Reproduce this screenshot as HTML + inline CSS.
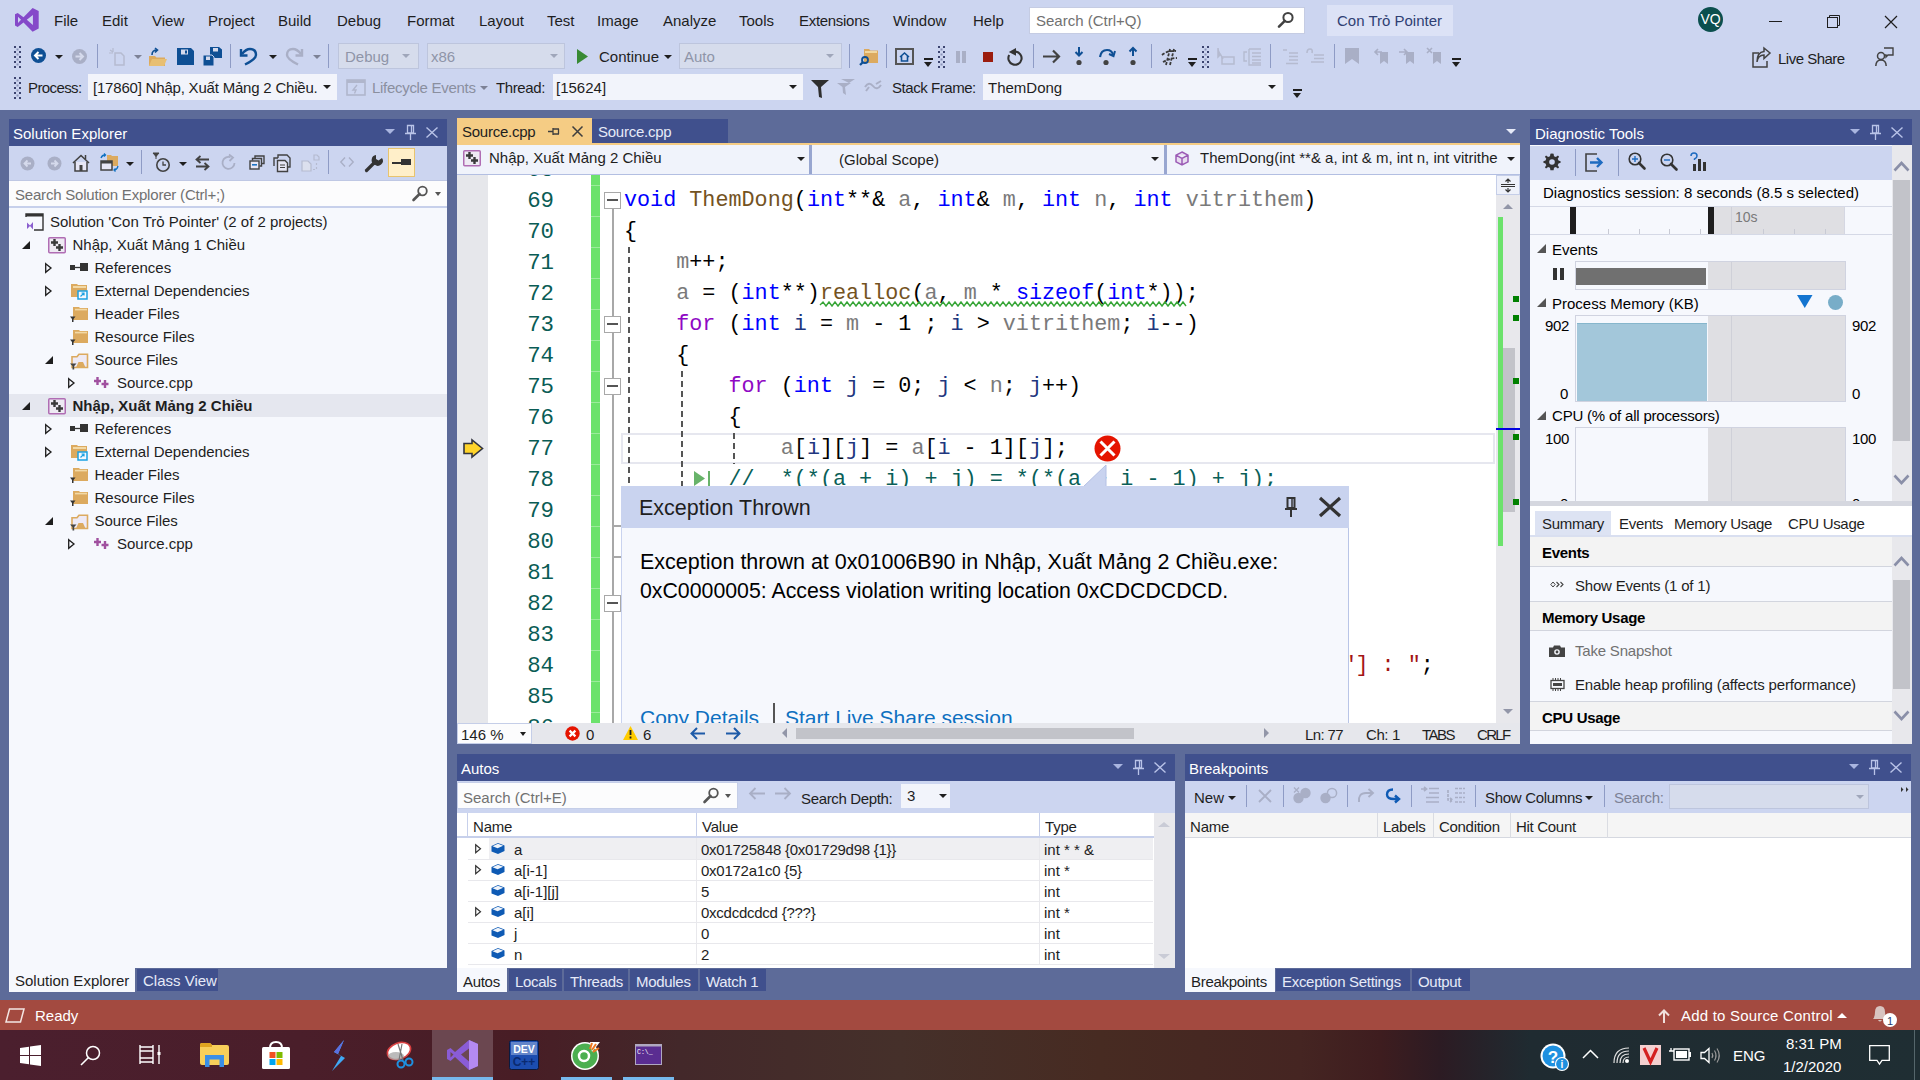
<!DOCTYPE html>
<html><head><meta charset="utf-8">
<style>
*{margin:0;padding:0;box-sizing:border-box}
html,body{width:1920px;height:1080px;overflow:hidden;background:#CCD5F0;font-family:"Liberation Sans",sans-serif;font-size:15px;color:#1E1E1E;position:relative}
.a{position:absolute}
svg{position:absolute;overflow:visible}
.t{position:absolute;font-size:15px;line-height:15px;white-space:nowrap;color:#1E1E1E}
.mono{font-family:"Liberation Mono",monospace}
.grip{position:absolute;width:6px;background-image:radial-gradient(circle at 1px 1px,#6D7495 0.8px,transparent 1px),radial-gradient(circle at 3px 3px,#6D7495 0.8px,transparent 1px);background-size:4px 4px}
.dd{position:absolute;width:0;height:0;border-left:4px solid transparent;border-right:4px solid transparent;border-top:4px solid #1E1E1E}
.dd.g{border-top-color:#7D8296}
.dd.w{border-top-color:#fff}
.sep{position:absolute;width:1px;background:#8E9BC5}
.combo{position:absolute;background:#F2F4FB}
.combo span{position:absolute;top:5px;font-size:15px;line-height:15px;white-space:nowrap;color:#1E1E1E}
.combo i{position:absolute;top:11px;width:0;height:0;border-left:4px solid transparent;border-right:4px solid transparent;border-top:4px solid #1E1E1E}
.combo.dis{background:#D6DCEC;border:1px solid #BDC5DD}
.combo.dis span{color:#8F95A8;top:5px}
.combo.dis i{border-top-color:#9FA6BA;top:10px}
.ovf{position:absolute;width:9px;height:9px}
.ovf:before{content:"";position:absolute;left:0;top:0;width:9px;height:2px;background:#1E1E1E}
.ovf:after{content:"";position:absolute;left:0;top:4px;border-left:4.5px solid transparent;border-right:4.5px solid transparent;border-top:5px solid #1E1E1E}
</style></head>
<body>

<!-- ===== TOP MENU ===== -->
<svg style="left:0px;top:0px" width="40" height="40" viewBox="0 0 40 40"><path d="M15 14.3 L17.7 12.9 L23.5 17.3 L32.6 7.9 L38.7 11.1 V28.5 L32.6 31.8 L23.5 22.6 L17.7 26.9 L15 25.5 Z M18 16.7 L21 19.8 L18 23.1 Z M32.9 15 L26.8 19.8 L32.9 25 Z" fill="#8549C9" fill-rule="evenodd"/></svg>
<div class="t" style="left:54px;top:13px">File</div>
<div class="t" style="left:102px;top:13px">Edit</div>
<div class="t" style="left:152px;top:13px">View</div>
<div class="t" style="left:208px;top:13px">Project</div>
<div class="t" style="left:278px;top:13px">Build</div>
<div class="t" style="left:337px;top:13px">Debug</div>
<div class="t" style="left:407px;top:13px">Format</div>
<div class="t" style="left:479px;top:13px">Layout</div>
<div class="t" style="left:547px;top:13px">Test</div>
<div class="t" style="left:597px;top:13px">Image</div>
<div class="t" style="left:663px;top:13px">Analyze</div>
<div class="t" style="left:739px;top:13px">Tools</div>
<div class="t" style="left:799px;top:13px;letter-spacing:-0.3px">Extensions</div>
<div class="t" style="left:893px;top:13px">Window</div>
<div class="t" style="left:973px;top:13px">Help</div>
<div class="a" style="left:1029px;top:7px;width:276px;height:27px;background:#FFFFFF;border:1px solid #C5CCE3"></div>
<div class="t" style="left:1036px;top:13px;color:#717171">Search (Ctrl+Q)</div>
<svg class="a" style="left:1277px;top:11px" width="18" height="18" viewBox="0 0 18 18"><circle cx="11" cy="6.5" r="4.6" fill="none" stroke="#424242" stroke-width="2"/><path d="M7.8 9.8 L2 15.6" stroke="#424242" stroke-width="2.6" stroke-linecap="round"/></svg>
<div class="a" style="left:1327px;top:5px;width:126px;height:31px;background:#DCE2F6"></div>
<div class="t" style="left:1337px;top:13px;color:#2F3F73">Con Trỏ Pointer</div>
<div class="a" style="left:1698px;top:7px;width:25px;height:25px;border-radius:50%;background:#0B4F4E;color:#fff;font-size:14px;line-height:25px;text-align:center">VQ</div>
<div class="a" style="left:1769px;top:21px;width:13px;height:1px;background:#1E1E1E"></div>
<svg class="a" style="left:1826px;top:14px" width="15" height="15" viewBox="0 0 15 15"><rect x="1.5" y="3.5" width="10" height="10" fill="none" stroke="#1E1E1E"/><path d="M3.5 3.5 V1.5 H13.5 V11.5 H11.5" fill="none" stroke="#1E1E1E"/></svg>
<svg class="a" style="left:1884px;top:15px" width="14" height="14" viewBox="0 0 14 14"><path d="M1 1 L13 13 M13 1 L1 13" stroke="#1E1E1E" stroke-width="1.2"/></svg>

<!-- ===== TOOLBAR ROW 1 ===== -->
<svg style="left:14px;top:42px" width="7" height="26"><rect x="0" y="4" width="2" height="2" fill="#3C4470"/><rect x="5" y="4" width="2" height="2" fill="#3C4470"/><rect x="2.5" y="6.5" width="2" height="2" fill="#8A93B8"/><rect x="0" y="9" width="2" height="2" fill="#3C4470"/><rect x="5" y="9" width="2" height="2" fill="#3C4470"/><rect x="2.5" y="11.5" width="2" height="2" fill="#8A93B8"/><rect x="0" y="14" width="2" height="2" fill="#3C4470"/><rect x="5" y="14" width="2" height="2" fill="#3C4470"/><rect x="2.5" y="16.5" width="2" height="2" fill="#8A93B8"/><rect x="0" y="19" width="2" height="2" fill="#3C4470"/><rect x="5" y="19" width="2" height="2" fill="#3C4470"/><rect x="2.5" y="21.5" width="2" height="2" fill="#8A93B8"/><rect x="0" y="24" width="2" height="2" fill="#3C4470"/><rect x="5" y="24" width="2" height="2" fill="#3C4470"/></svg>
<svg class="a" style="left:30px;top:47px" width="17" height="17" viewBox="0 0 17 17"><circle cx="8.5" cy="8.5" r="7.5" fill="#0E4F94"/><path d="M12.5 8.5 H5.5 M8.5 5 L5 8.5 L8.5 12" stroke="#fff" stroke-width="2" fill="none"/></svg>
<div class="dd" style="left:55px;top:55px"></div>
<svg class="a" style="left:71px;top:48px" width="17" height="17" viewBox="0 0 17 17"><circle cx="8.5" cy="8.5" r="7.5" fill="#A9AFC6"/><path d="M4.5 8.5 H11.5 M8.5 5 L12 8.5 L8.5 12" stroke="#D5DAEC" stroke-width="2" fill="none"/></svg>
<div class="sep" style="left:97px;top:44px;height:24px"></div>
<svg class="a" style="left:108px;top:47px" width="18" height="19" viewBox="0 0 18 19"><path d="M7 6 H13 L16 9 V18 H7 Z" fill="none" stroke="#B5BBD0" stroke-width="1.5"/><path d="M2 3 L5 5 M5 1 V5 M1 6 H5" stroke="#B5BBD0" stroke-width="1.2"/></svg>
<div class="dd g" style="left:134px;top:55px"></div>
<svg class="a" style="left:148px;top:47px" width="20" height="20" viewBox="0 0 20 20"><path d="M1 9 H7 L8.5 10.5 H17 V19 H1 Z" fill="#DCAA5F"/><path d="M1 19 L4 12 H19 L16 19 Z" fill="#E8BF73"/><path d="M4 8 Q4 3 9 3 M7 1 L9.5 3 L7 5.5" stroke="#0E4F94" stroke-width="1.6" fill="none"/></svg>
<svg class="a" style="left:177px;top:48px" width="17" height="17" viewBox="0 0 17 17"><path d="M0 0 H14 L17 3 V17 H0 Z" fill="#0E4F94"/><rect x="4" y="1.5" width="7" height="5" fill="#D5DAEC"/><rect x="8" y="2.5" width="2" height="3" fill="#0E4F94"/></svg>
<svg class="a" style="left:203px;top:47px" width="19" height="19" viewBox="0 0 19 19"><path d="M7 0 H16 L19 2.5 V11 H7 Z" fill="#0E4F94"/><rect x="10" y="1" width="5" height="3.5" fill="#D5DAEC"/><path d="M0 8 H9 L11 10 V19 H0 Z" fill="#0E4F94" stroke="#CCD5F0" stroke-width="1"/><rect x="3" y="9.5" width="4" height="3.5" fill="#D5DAEC"/></svg>
<div class="sep" style="left:230px;top:44px;height:24px"></div>
<svg class="a" style="left:240px;top:46px" width="18" height="20" viewBox="0 0 18 20"><path d="M2 8 Q6 3 10 3 Q16 3 16 9 Q16 13 5 18.5" stroke="#0E4F94" stroke-width="2.4" fill="none"/><path d="M1 3 V9.5 H7.5" stroke="#0E4F94" stroke-width="2.4" fill="none"/></svg>
<div class="dd" style="left:269px;top:55px"></div>
<svg class="a" style="left:285px;top:46px" width="18" height="20" viewBox="0 0 18 20"><path d="M16 8 Q12 3 8 3 Q2 3 2 9 Q2 13 13 18.5" stroke="#A9AFC6" stroke-width="2.4" fill="none"/><path d="M17 3 V9.5 H10.5" stroke="#A9AFC6" stroke-width="2.4" fill="none"/></svg>
<div class="dd g" style="left:313px;top:55px"></div>
<div class="sep" style="left:328px;top:44px;height:24px"></div>
<div class="combo dis" style="left:338px;top:43px;width:81px;height:26px"><span style="left:6px">Debug</span><i style="left:63px"></i></div>
<div class="combo dis" style="left:427px;top:43px;width:138px;height:26px"><span style="left:3px">x86</span><i style="left:122px"></i></div>
<svg class="a" style="left:577px;top:49px" width="12" height="15" viewBox="0 0 12 15"><path d="M0 0 L11 7.5 L0 15 Z" fill="#388A34"/></svg>
<div class="t" style="left:599px;top:49px">Continue</div>
<div class="dd" style="left:664px;top:55px"></div>
<div class="combo dis" style="left:679px;top:43px;width:163px;height:26px"><span style="left:4px">Auto</span><i style="left:146px"></i></div>
<div class="sep" style="left:849px;top:44px;height:24px"></div>
<svg class="a" style="left:859px;top:47px" width="20" height="20" viewBox="0 0 20 20"><path d="M5 2 H10 L11.5 3.5 H19 V16 H5 Z" fill="#DCAA5F"/><rect x="6" y="4" width="12" height="2" fill="#F1D79E"/><circle cx="6" cy="13" r="3" fill="none" stroke="#0E4F94" stroke-width="1.8"/><path d="M3.8 15.2 L1 18" stroke="#0E4F94" stroke-width="2.2"/></svg>
<div class="sep" style="left:886px;top:44px;height:24px"></div>
<svg class="a" style="left:895px;top:48px" width="20" height="17" viewBox="0 0 20 17"><rect x="1" y="1" width="17" height="15" fill="none" stroke="#555" stroke-width="2"/><path d="M5 9 L9.5 5 L14 9 M6.5 8 V13 H12.5 V8" stroke="#0E4F94" stroke-width="1.6" fill="none"/></svg>
<div class="ovf" style="left:924px;top:58px"></div>
<svg style="left:938px;top:42px" width="7" height="26"><rect x="0" y="4" width="2" height="2" fill="#3C4470"/><rect x="5" y="4" width="2" height="2" fill="#3C4470"/><rect x="2.5" y="6.5" width="2" height="2" fill="#8A93B8"/><rect x="0" y="9" width="2" height="2" fill="#3C4470"/><rect x="5" y="9" width="2" height="2" fill="#3C4470"/><rect x="2.5" y="11.5" width="2" height="2" fill="#8A93B8"/><rect x="0" y="14" width="2" height="2" fill="#3C4470"/><rect x="5" y="14" width="2" height="2" fill="#3C4470"/><rect x="2.5" y="16.5" width="2" height="2" fill="#8A93B8"/><rect x="0" y="19" width="2" height="2" fill="#3C4470"/><rect x="5" y="19" width="2" height="2" fill="#3C4470"/><rect x="2.5" y="21.5" width="2" height="2" fill="#8A93B8"/><rect x="0" y="24" width="2" height="2" fill="#3C4470"/><rect x="5" y="24" width="2" height="2" fill="#3C4470"/></svg>
<div class="a" style="left:956px;top:51px;width:4px;height:12px;background:#A9AFC6"></div>
<div class="a" style="left:962px;top:51px;width:4px;height:12px;background:#A9AFC6"></div>
<div class="a" style="left:983px;top:52px;width:10px;height:10px;background:#9B1C0E"></div>
<svg style="left:1006px;top:47px" width="18" height="19" viewBox="0 0 18 19"><path d="M9.5 4.6 A6.6 6.6 0 1 1 3.2 8" stroke="#333" stroke-width="2.1" fill="none"/><path d="M2.8 5 L10 1 V8.8 Z" fill="#333"/></svg>
<div class="sep" style="left:1033px;top:44px;height:24px"></div>
<svg class="a" style="left:1043px;top:49px" width="18" height="15" viewBox="0 0 18 15"><path d="M0 7.5 H16 M10 1.5 L16 7.5 L10 13.5" stroke="#424242" stroke-width="2.2" fill="none"/></svg>
<svg class="a" style="left:1074px;top:47px" width="10" height="20" viewBox="0 0 10 20"><path d="M5 0 V8 M1.5 5 L5 8.5 L8.5 5" stroke="#0E4F94" stroke-width="2" fill="none"/><circle cx="5" cy="15.5" r="2.6" fill="#424242"/></svg>
<svg class="a" style="left:1098px;top:47px" width="18" height="20" viewBox="0 0 18 20"><path d="M2 10 Q3 3 9 3 Q14 3 15 8" stroke="#0E4F94" stroke-width="2.2" fill="none"/><path d="M11 7 L15.5 9 L17 4" stroke="#0E4F94" stroke-width="2" fill="none"/><circle cx="8" cy="15.5" r="2.6" fill="#424242"/></svg>
<svg class="a" style="left:1128px;top:47px" width="10" height="20" viewBox="0 0 10 20"><path d="M5 9 V1 M1.5 4.5 L5 1 L8.5 4.5" stroke="#0E4F94" stroke-width="2" fill="none"/><circle cx="5" cy="15.5" r="2.6" fill="#424242"/></svg>
<div class="sep" style="left:1151px;top:44px;height:24px"></div>
<svg class="a" style="left:1160px;top:48px" width="19" height="18" viewBox="0 0 19 18"><path d="M2 7 Q8 2 16 3 M3 14 Q10 10 17 10 M6 17 L10 1 M10 17 L14 1" stroke="#3A3A3A" stroke-width="1.8" stroke-dasharray="3 1.5" fill="none"/></svg>
<div class="ovf" style="left:1188px;top:58px"></div>
<svg style="left:1202px;top:42px" width="7" height="26"><rect x="0" y="4" width="2" height="2" fill="#3C4470"/><rect x="5" y="4" width="2" height="2" fill="#3C4470"/><rect x="2.5" y="6.5" width="2" height="2" fill="#8A93B8"/><rect x="0" y="9" width="2" height="2" fill="#3C4470"/><rect x="5" y="9" width="2" height="2" fill="#3C4470"/><rect x="2.5" y="11.5" width="2" height="2" fill="#8A93B8"/><rect x="0" y="14" width="2" height="2" fill="#3C4470"/><rect x="5" y="14" width="2" height="2" fill="#3C4470"/><rect x="2.5" y="16.5" width="2" height="2" fill="#8A93B8"/><rect x="0" y="19" width="2" height="2" fill="#3C4470"/><rect x="5" y="19" width="2" height="2" fill="#3C4470"/><rect x="2.5" y="21.5" width="2" height="2" fill="#8A93B8"/><rect x="0" y="24" width="2" height="2" fill="#3C4470"/><rect x="5" y="24" width="2" height="2" fill="#3C4470"/></svg>
<svg class="a" style="left:1217px;top:48px" width="18" height="17" viewBox="0 0 18 17"><path d="M1 0 V9 L3.5 6.5 L6 11" stroke="#B5BBD0" stroke-width="1.5" fill="#B5BBD0"/><rect x="5" y="9" width="12" height="7" fill="none" stroke="#B5BBD0" stroke-width="1.5"/></svg>
<svg class="a" style="left:1243px;top:48px" width="19" height="18" viewBox="0 0 19 18"><path d="M6 1 H18 M6 1 V17 H18 M9 5 H18 M9 8.5 H18 M9 12 H18 M9 15 H18 M4 4 H1 V13 H4" stroke="#B5BBD0" stroke-width="1.4" fill="none"/></svg>
<div class="sep" style="left:1270px;top:44px;height:24px"></div>
<svg class="a" style="left:1283px;top:49px" width="15" height="16" viewBox="0 0 15 16"><path d="M0 1 H4 M6 4 H15 M6 7.5 H15 M6 11 H15 M3 14.5 H15" stroke="#B5BBD0" stroke-width="1.6"/></svg>
<svg class="a" style="left:1306px;top:48px" width="18" height="17" viewBox="0 0 18 17"><path d="M1 5 Q1 1 4 1 Q7 1 6 5 M8 7 H18 M8 10.5 H18 M5 14 H18" stroke="#B5BBD0" stroke-width="1.6" fill="none"/></svg>
<div class="sep" style="left:1334px;top:44px;height:24px"></div>
<svg class="a" style="left:1345px;top:48px" width="15" height="16" viewBox="0 0 15 16"><path d="M0 0 H14 V16 L7 11 L0 16 Z" fill="#A9AFC6"/></svg>
<svg class="a" style="left:1373px;top:48px" width="16" height="16" viewBox="0 0 16 16"><path d="M7 4 H15 V16 L11 13 L7 16 Z" fill="#A9AFC6"/><path d="M9 4 H2 M5 1 L2 4 L5 7" stroke="#A9AFC6" stroke-width="1.6" fill="none"/></svg>
<svg class="a" style="left:1399px;top:48px" width="16" height="16" viewBox="0 0 16 16"><path d="M7 4 H15 V16 L11 13 L7 16 Z" fill="#A9AFC6"/><path d="M0 4 H8 M5 1 L8 4 L5 7" stroke="#A9AFC6" stroke-width="1.6" fill="none"/></svg>
<svg class="a" style="left:1426px;top:47px" width="16" height="17" viewBox="0 0 16 17"><path d="M7 5 H15 V17 L11 14 L7 17 Z" fill="#A9AFC6"/><path d="M1 1 L6 6 M6 1 L1 6" stroke="#A9AFC6" stroke-width="1.6"/></svg>
<div class="ovf" style="left:1452px;top:58px"></div>
<svg class="a" style="left:1752px;top:47px" width="19" height="21" viewBox="0 0 19 21"><path d="M7 6 H1 V20 H15 V14" stroke="#424242" stroke-width="1.5" fill="none"/><path d="M5 15 Q6 8 12 8 V11.5 L18 6 L12 1 V4.5 Q5 5 5 15 Z" stroke="#424242" stroke-width="1.5" fill="none"/></svg>
<div class="t" style="left:1778px;top:51px;letter-spacing:-0.5px">Live Share</div>
<svg class="a" style="left:1875px;top:47px" width="19" height="20" viewBox="0 0 19 20"><circle cx="6" cy="9" r="3.5" fill="none" stroke="#424242" stroke-width="1.5"/><path d="M0.8 19 Q1 13 6 13 Q11 13 11.2 19" fill="none" stroke="#424242" stroke-width="1.5"/><path d="M9 1 H18 V8 H13 L11 10 V8 H9" fill="none" stroke="#424242" stroke-width="1.4"/></svg>

<!-- ===== TOOLBAR ROW 2 ===== -->
<svg style="left:14px;top:73px" width="7" height="26"><rect x="0" y="4" width="2" height="2" fill="#3C4470"/><rect x="5" y="4" width="2" height="2" fill="#3C4470"/><rect x="2.5" y="6.5" width="2" height="2" fill="#8A93B8"/><rect x="0" y="9" width="2" height="2" fill="#3C4470"/><rect x="5" y="9" width="2" height="2" fill="#3C4470"/><rect x="2.5" y="11.5" width="2" height="2" fill="#8A93B8"/><rect x="0" y="14" width="2" height="2" fill="#3C4470"/><rect x="5" y="14" width="2" height="2" fill="#3C4470"/><rect x="2.5" y="16.5" width="2" height="2" fill="#8A93B8"/><rect x="0" y="19" width="2" height="2" fill="#3C4470"/><rect x="5" y="19" width="2" height="2" fill="#3C4470"/><rect x="2.5" y="21.5" width="2" height="2" fill="#8A93B8"/><rect x="0" y="24" width="2" height="2" fill="#3C4470"/><rect x="5" y="24" width="2" height="2" fill="#3C4470"/></svg>
<div class="t" style="left:28px;top:80px;letter-spacing:-0.6px">Process:</div>
<div class="combo" style="left:88px;top:74px;width:249px;height:26px"><span style="left:5px;top:6px;letter-spacing:-0.2px">[17860] Nhập, Xuất Mảng 2 Chiều.</span><i style="left:235px"></i></div>
<svg class="a" style="left:346px;top:79px" width="20" height="17" viewBox="0 0 20 17"><rect x="1" y="1" width="18" height="15" fill="none" stroke="#B0B6CC" stroke-width="1.6"/><rect x="1" y="1" width="18" height="3" fill="#B0B6CC"/><path d="M11 6 L7 11 H10 L8.5 14.5" stroke="#B0B6CC" stroke-width="1.4" fill="none"/></svg>
<div class="t" style="left:372px;top:80px;color:#8A8F9F;letter-spacing:-0.3px">Lifecycle Events</div>
<div class="dd g" style="left:480px;top:86px"></div>
<div class="t" style="left:496px;top:80px;letter-spacing:-0.4px">Thread:</div>
<div class="combo" style="left:553px;top:74px;width:250px;height:26px"><span style="left:3px;top:6px">[15624]</span><i style="left:236px"></i></div>
<svg class="a" style="left:811px;top:79px" width="18" height="19" viewBox="0 0 18 19"><path d="M0 1 H18 L10 8 L11 19 L8 18 L7 8 Z" fill="#2E2E2E"/></svg>
<svg class="a" style="left:837px;top:79px" width="18" height="17" viewBox="0 0 18 17"><path d="M4 0 H18 L12 4 Z M0 4 H14 L8 8 L9 16 L6 14 L5.5 8 Z" fill="#A9AFC6"/></svg>
<svg class="a" style="left:864px;top:80px" width="18" height="14" viewBox="0 0 18 14"><path d="M1 7 Q5 1 9 6 Q13 11 17 5 M2 11 L5 7 M12 4 L17 1" stroke="#A9AFC6" stroke-width="2" fill="none"/></svg>
<div class="t" style="left:892px;top:80px;letter-spacing:-0.45px">Stack Frame:</div>
<div class="combo" style="left:983px;top:74px;width:300px;height:26px"><span style="left:5px;top:6px">ThemDong</span><i style="left:285px"></i></div>
<div class="ovf" style="left:1293px;top:89px"></div>

<div class="a" style="left:0;top:110px;width:1920px;height:890px;background:#5D6B99"></div>

<!-- ===== SOLUTION EXPLORER ===== -->
<div class="a" style="left:9px;top:119px;width:438px;height:27px;background:#40508D"></div>
<div class="t" style="left:13px;top:126px;color:#fff">Solution Explorer</div>
<div class="dd" style="left:385px;top:129px;border-top-color:#A9B5E0;border-left-width:5px;border-right-width:5px;border-top-width:5px"></div>
<svg style="left:405px;top:125px" width="11" height="15" viewBox="0 0 11 15"><path d="M2.5 0.5 H8.5 V8 H2.5 Z M0 8.5 H11 M5.5 9 V15 M6.5 1 V8" stroke="#B9C3E8" stroke-width="1.3" fill="none"/></svg>
<svg style="left:426px;top:127px" width="12" height="11" viewBox="0 0 12 11"><path d="M0.5 0.5 L11.5 10.5 M11.5 0.5 L0.5 10.5" stroke="#B9C3E8" stroke-width="1.4"/></svg>
<div class="a" style="left:9px;top:146px;width:438px;height:34px;background:#CCD5F0"></div>
<svg style="left:20px;top:156px" width="15" height="15" viewBox="0 0 15 15"><circle cx="7.5" cy="7.5" r="7" fill="#A9AFC6"/><path d="M11 7.5 H4.5 M7.5 4.5 L4.5 7.5 L7.5 10.5" stroke="#D5DAEC" stroke-width="1.8" fill="none"/></svg>
<svg style="left:47px;top:156px" width="15" height="15" viewBox="0 0 15 15"><circle cx="7.5" cy="7.5" r="7" fill="#A9AFC6"/><path d="M4 7.5 H10.5 M7.5 4.5 L10.5 7.5 L7.5 10.5" stroke="#D5DAEC" stroke-width="1.8" fill="none"/></svg>
<svg style="left:72px;top:154px" width="18" height="18" viewBox="0 0 18 18"><path d="M1 9 L9 1.5 L17 9" stroke="#424242" stroke-width="1.6" fill="none"/><path d="M3 8 V17 H15 V8" stroke="#424242" stroke-width="1.5" fill="#E6E6F5"/><rect x="7.5" y="11" width="3" height="6" fill="#424242"/><path d="M13.5 1 V5" stroke="#424242" stroke-width="1.5"/></svg>
<svg style="left:100px;top:153px" width="19" height="18" viewBox="0 0 19 18"><path d="M7 2 H11 L12 3 H18 V13 H7 Z" fill="#DCAA5F"/><rect x="1" y="8" width="11" height="9" fill="#E6E6F5" stroke="#424242" stroke-width="1.5"/><rect x="1" y="8" width="11" height="2.5" fill="#424242"/><path d="M1 5 Q2 2 5 2 M4 0.5 L5.5 2 L4 3.5" stroke="#0E70C0" stroke-width="1.3" fill="none"/><path d="M18 13 Q17 17 14 17 M15.5 15.5 L14 17 L15.5 18.5" stroke="#0E70C0" stroke-width="1.3" fill="none"/></svg>
<div class="dd" style="left:126px;top:162px"></div>
<div class="sep" style="left:141px;top:150px;height:24px"></div>
<svg style="left:153px;top:153px" width="18" height="19" viewBox="0 0 18 19"><path d="M0 0 H6 L3 3.5 Z M3 2 V6" stroke="#424242" stroke-width="1" fill="#424242"/><circle cx="10" cy="12" r="6.2" fill="none" stroke="#424242" stroke-width="1.6"/><path d="M10 8.5 V12 H13" stroke="#424242" stroke-width="1.3" fill="none"/></svg>
<div class="dd" style="left:179px;top:162px"></div>
<svg style="left:195px;top:155px" width="15" height="16" viewBox="0 0 15 16"><path d="M14 4.5 H2 M5.5 1 L1.5 4.5 L5.5 8 M1 11.5 H13 M9.5 8 L13.5 11.5 L9.5 15" stroke="#424242" stroke-width="1.8" fill="none"/></svg>
<svg style="left:221px;top:154px" width="16" height="17" viewBox="0 0 16 17"><path d="M13.5 9 A6 6 0 1 1 9.5 3.2" stroke="#A9AFC6" stroke-width="1.8" fill="none"/><path d="M8 0.5 L12 3.5 L8.5 7" stroke="#A9AFC6" stroke-width="1.8" fill="none"/></svg>
<svg style="left:249px;top:155px" width="16" height="15" viewBox="0 0 16 15"><rect x="1" y="6" width="9" height="8" fill="#E6E6F5" stroke="#424242" stroke-width="1.4"/><path d="M3.5 5.5 V3.5 H12.5 V11 H10.5 M6 3 V1 H15 V8.5 H12.8" stroke="#424242" stroke-width="1.4" fill="none"/><rect x="3" y="9" width="5" height="1.6" fill="#1E74C4"/></svg>
<svg style="left:273px;top:154px" width="19" height="18" viewBox="0 0 19 18"><path d="M5 4 V1 H14 L17 4 V13 H15" stroke="#424242" stroke-width="1.4" fill="none"/><path d="M1 12 V4 H5" stroke="#424242" stroke-width="1.4" fill="none"/><path d="M4.5 6.5 H12 L14.5 9 V17.5 H4.5 Z" fill="#E6E6F5" stroke="#424242" stroke-width="1.4"/><path d="M7 11 H12 M7 13.5 H12" stroke="#424242" stroke-width="1.2"/></svg>
<svg style="left:301px;top:154px" width="19" height="18" viewBox="0 0 19 18"><path d="M1 7 H7 L10 10 V17 H1 Z" fill="#DCE0EE" stroke="#B5BBD0" stroke-width="1.2"/><path d="M13 1 H16 L18 3 V6 H13 Z" fill="none" stroke="#B5BBD0" stroke-width="1.2"/><path d="M15.5 9 V11 M15.5 13 V15 M12 15.5 H14" stroke="#B5BBD0" stroke-width="1.2"/></svg>
<div class="sep" style="left:328px;top:150px;height:24px"></div>
<svg style="left:340px;top:157px" width="14" height="10" viewBox="0 0 14 10"><path d="M5 0.5 L0.8 5 L5 9.5 M9 0.5 L13.2 5 L9 9.5" stroke="#A9AFC6" stroke-width="1.4" fill="none"/></svg>
<svg style="left:365px;top:154px" width="18" height="18" viewBox="0 0 18 18"><path d="M1.5 16.5 L9 9" stroke="#333" stroke-width="3.2" stroke-linecap="round"/><path d="M9.5 10.5 A5 5 0 0 1 11 1 L11 5 L13.5 6.5 L17 4 A5 5 0 0 1 9.5 10.5 Z" fill="#333"/></svg>
<div class="a" style="left:388px;top:148px;width:27px;height:29px;background:#FFEFC9;border:1px solid #E8C46E"></div>
<div class="a" style="left:392px;top:162px;width:18px;height:2px;background:#333"></div>
<div class="a" style="left:401px;top:159px;width:10px;height:6px;background:#333"></div>
<div class="a" style="left:9px;top:180px;width:438px;height:1px;background:#BFC8E4"></div>
<div class="a" style="left:9px;top:181px;width:438px;height:25px;background:#FCFCFD"></div>
<div class="t" style="left:15px;top:187px;color:#717171;letter-spacing:-0.2px">Search Solution Explorer (Ctrl+;)</div>
<svg style="left:412px;top:185px" width="16" height="17" viewBox="0 0 16 17"><circle cx="10.5" cy="6" r="4.3" fill="none" stroke="#555" stroke-width="1.8"/><path d="M7.5 9 L1.5 15" stroke="#555" stroke-width="2.6" stroke-linecap="round"/></svg>
<div class="dd" style="left:435px;top:192px;border-top-color:#555;border-left-width:3.5px;border-right-width:3.5px"></div>
<div class="a" style="left:9px;top:206px;width:438px;height:2px;background:#C7D0EB"></div>
<div class="a" style="left:9px;top:208px;width:438px;height:760px;background:#F6F8FD"></div>
<!-- tree -->
<div class="a" style="left:9px;top:394px;width:438px;height:23px;background:#E5E7EF"></div>
<svg style="left:25px;top:213px" width="19" height="18" viewBox="0 0 19 18"><path d="M1 4 V1 H18 V17 H9" stroke="#333" stroke-width="1.4" fill="none"/><rect x="1" y="1" width="17" height="2.5" fill="#333"/><path d="M2 9.5 L5 12.5 L8 9 V16.5 L5 13 L2 16 Z" fill="#8B5FCF"/></svg>
<div class="t" style="left:50px;top:214px">Solution 'Con Trỏ Pointer' (2 of 2 projects)</div>
<svg width="0" height="0" style="position:absolute"><defs>
<g id="i-exp"><path d="M8 0 V8 H0 Z" fill="#1E1E1E"/></g>
<g id="i-col"><path d="M0.7 0.7 L6 5 L0.7 9.3 Z" fill="none" stroke="#1E1E1E" stroke-width="1.3"/></g>
<g id="i-proj"><rect x="0.75" y="0.75" width="16.5" height="15" rx="1" fill="#EEEAF3" stroke="#B06DB4" stroke-width="1.5"/><path d="M6.5 2 V9 M3 5.5 H10 M11.5 7 V14 M8 10.5 H15" stroke="#3A3A3A" stroke-width="2.4"/></g>
<g id="i-refs"><rect x="0" y="2" width="5" height="5" fill="#333"/><rect x="10" y="0" width="8" height="8" fill="#333"/><path d="M5 4.5 H10" stroke="#333" stroke-width="1.3"/></g>
<g id="i-ext"><path d="M1 2 H7 L8 3 H17 V15 H1 Z" fill="#DCAA5F"/><rect x="3" y="4" width="13" height="2" fill="#F2D9A6"/><rect x="8" y="9" width="9" height="8" fill="#F6F8FD" stroke="#1BA1E2" stroke-width="1.5"/><path d="M10.5 14.5 L14 11 M11.5 11 H14 V13.5" stroke="#1BA1E2" stroke-width="1.2" fill="none"/></g>
<g id="i-filt"><path d="M3 2 H9 L10 3 H18 V15 H3 Z" fill="#DCAA5F"/><rect x="5" y="3.8" width="12" height="1.6" fill="#F2D9A6"/><path d="M0 11.5 H5.5 L3.5 14 V17 H2 V14 Z" fill="#333"/></g>
<g id="i-filto"><path d="M2 6 V16.5 H17.5 V3.2 H9 L7 5.8 H2 Z" fill="#EEEAF5" stroke="#DCAA5F" stroke-width="1.6"/><path d="M6 16.5 L8.5 11 H13 L15.5 16.5 Z" fill="#DCAA5F"/><path d="M0 12.5 H6.5 L4.2 15 V18.5 H2.5 V15 Z" fill="#444"/></g>
<g id="i-cpp"><path d="M3.5 0 V8 M0 4 H7 M11 3 V11 M7.5 7 H14.5" stroke="#A0509F" stroke-width="2.4"/></g>
</defs></svg>
<svg style="left:22px;top:241px" width="9" height="9"><use href="#i-exp"/></svg>
<svg style="left:48px;top:237px" width="19" height="18"><use href="#i-proj"/></svg>
<div class="t" style="left:72.5px;top:237px">Nhập, Xuất Mảng 1 Chiều</div>
<svg style="left:45px;top:263px" width="8" height="11"><use href="#i-col"/></svg>
<svg style="left:70px;top:263px" width="19" height="18"><use href="#i-refs"/></svg>
<div class="t" style="left:94.5px;top:260px">References</div>
<svg style="left:45px;top:286px" width="8" height="11"><use href="#i-col"/></svg>
<svg style="left:70px;top:282px" width="19" height="18"><use href="#i-ext"/></svg>
<div class="t" style="left:94.5px;top:283px">External Dependencies</div>
<svg style="left:70px;top:305px" width="19" height="18"><use href="#i-filt"/></svg>
<div class="t" style="left:94.5px;top:306px">Header Files</div>
<svg style="left:70px;top:328px" width="19" height="18"><use href="#i-filt"/></svg>
<div class="t" style="left:94.5px;top:329px">Resource Files</div>
<svg style="left:45px;top:356px" width="9" height="9"><use href="#i-exp"/></svg>
<svg style="left:70px;top:351px" width="19" height="18"><use href="#i-filto"/></svg>
<div class="t" style="left:94.5px;top:352px">Source Files</div>
<svg style="left:68px;top:378px" width="8" height="11"><use href="#i-col"/></svg>
<svg style="left:94px;top:377px" width="19" height="18"><use href="#i-cpp"/></svg>
<div class="t" style="left:117px;top:375px">Source.cpp</div>
<svg style="left:22px;top:402px" width="9" height="9"><use href="#i-exp"/></svg>
<svg style="left:48px;top:398px" width="19" height="18"><use href="#i-proj"/></svg>
<div class="t" style="left:72.5px;top:398px;font-weight:bold">Nhập, Xuất Mảng 2 Chiều</div>
<svg style="left:45px;top:424px" width="8" height="11"><use href="#i-col"/></svg>
<svg style="left:70px;top:424px" width="19" height="18"><use href="#i-refs"/></svg>
<div class="t" style="left:94.5px;top:421px">References</div>
<svg style="left:45px;top:447px" width="8" height="11"><use href="#i-col"/></svg>
<svg style="left:70px;top:443px" width="19" height="18"><use href="#i-ext"/></svg>
<div class="t" style="left:94.5px;top:444px">External Dependencies</div>
<svg style="left:70px;top:466px" width="19" height="18"><use href="#i-filt"/></svg>
<div class="t" style="left:94.5px;top:467px">Header Files</div>
<svg style="left:70px;top:489px" width="19" height="18"><use href="#i-filt"/></svg>
<div class="t" style="left:94.5px;top:490px">Resource Files</div>
<svg style="left:45px;top:517px" width="9" height="9"><use href="#i-exp"/></svg>
<svg style="left:70px;top:512px" width="19" height="18"><use href="#i-filto"/></svg>
<div class="t" style="left:94.5px;top:513px">Source Files</div>
<svg style="left:68px;top:539px" width="8" height="11"><use href="#i-col"/></svg>
<svg style="left:94px;top:538px" width="19" height="18"><use href="#i-cpp"/></svg>
<div class="t" style="left:117px;top:536px">Source.cpp</div>
<div class="a" style="left:9px;top:968px;width:126px;height:24px;background:#F6F8FD"></div>
<div class="t" style="left:15px;top:973px">Solution Explorer</div>
<div class="a" style="left:137px;top:969px;width:81px;height:22px;background:#40508D"></div>
<div class="t" style="left:143px;top:973px;color:#E6EAF8">Class View</div>

<div class="a" style="left:457px;top:118px;width:135px;height:27px;background:#F5CC84"></div>
<div class="t" style="left:462px;top:124px;letter-spacing:-0.25px">Source.cpp</div>
<svg style="left:548px;top:126px" width="12" height="11" viewBox="0 0 12 11"><path d="M0 5.5 H5 M5 2 V9 M5 3 H11 M5 8 H11 M10.5 3 V8" stroke="#3E3E3E" stroke-width="1.3" fill="none"/></svg>
<svg style="left:572px;top:126px" width="11" height="11" viewBox="0 0 11 11"><path d="M0.5 0.5 L10.5 10.5 M10.5 0.5 L0.5 10.5" stroke="#3E3E3E" stroke-width="1.5"/></svg>
<div class="a" style="left:592px;top:119px;width:136px;height:24px;background:#40508D"></div>
<div class="t" style="left:598px;top:124px;color:#E6EAF8;letter-spacing:-0.25px">Source.cpp</div>
<div class="dd" style="left:1506px;top:129px;border-top-color:#E6EAF8;border-left-width:5px;border-right-width:5px;border-top-width:5px"></div>
<div class="a" style="left:457px;top:143px;width:1063px;height:2px;background:#F5CC84"></div>
<div class="a" style="left:457px;top:145px;width:1063px;height:30px;background:#F0F3FB;border-bottom:1px solid #B3BFE2"></div>
<svg style="left:463px;top:150px" width="19" height="18"><use href="#i-proj"/></svg>
<div class="t" style="left:489px;top:150px">Nhập, Xuất Mảng 2 Chiều</div>
<div class="dd" style="left:797px;top:157px"></div>
<div class="a" style="left:809px;top:145px;width:3px;height:29px;background:#98A6D0"></div>
<div class="t" style="left:839px;top:152px">(Global Scope)</div>
<div class="dd" style="left:1151px;top:157px"></div>
<div class="a" style="left:1164px;top:145px;width:3px;height:29px;background:#98A6D0"></div>
<svg style="left:1175px;top:151px" width="14" height="15" viewBox="0 0 14 15"><path d="M7 1 L13 4.2 V10.8 L7 14 L1 10.8 V4.2 Z M1 4.2 L7 7.5 L13 4.2 M7 7.5 V14" stroke="#9B5BB5" stroke-width="1.5" fill="#E8DDF0"/></svg>
<div class="t" style="left:1200px;top:150px">ThemDong(int **&amp; a, int &amp; m, int n, int vitrithe</div>
<div class="a" style="left:1502px;top:146px;width:12px;height:26px;background:#F0F3FB"></div>
<div class="dd" style="left:1507px;top:157px"></div>
<div class="a" style="left:457px;top:175px;width:1039px;height:548px;background:#FFFFFF;overflow:hidden" id="code">
<div class="a" style="left:0;top:0;width:31px;height:548px;background:#E6E7EB"></div>
<svg style="left:6px;top:264px" width="21" height="19" viewBox="0 0 21 19"><path d="M1 4.5 H9 V1 L19.5 9.5 L9 18 V14.5 H1 Z" fill="#FFD42A" stroke="#33353F" stroke-width="1.6" stroke-linejoin="miter"/></svg>
<div class="a" style="left:134px;top:0;width:9px;height:548px;background:#6CE26C"></div>
<div class="a" style="left:134px;top:10px;width:9px;height:1px;background:#9CEB9C"></div>
<div class="a" style="left:134px;top:41px;width:9px;height:1px;background:#9CEB9C"></div>
<div class="a" style="left:134px;top:72px;width:9px;height:1px;background:#9CEB9C"></div>
<div class="a" style="left:134px;top:103px;width:9px;height:1px;background:#9CEB9C"></div>
<div class="a" style="left:134px;top:134px;width:9px;height:1px;background:#9CEB9C"></div>
<div class="a" style="left:134px;top:165px;width:9px;height:1px;background:#9CEB9C"></div>
<div class="a" style="left:134px;top:196px;width:9px;height:1px;background:#9CEB9C"></div>
<div class="a" style="left:134px;top:227px;width:9px;height:1px;background:#9CEB9C"></div>
<div class="a" style="left:134px;top:258px;width:9px;height:1px;background:#9CEB9C"></div>
<div class="a" style="left:134px;top:289px;width:9px;height:1px;background:#9CEB9C"></div>
<div class="a" style="left:134px;top:320px;width:9px;height:1px;background:#9CEB9C"></div>
<div class="a" style="left:134px;top:351px;width:9px;height:1px;background:#9CEB9C"></div>
<div class="a" style="left:134px;top:382px;width:9px;height:1px;background:#9CEB9C"></div>
<div class="a" style="left:134px;top:413px;width:9px;height:1px;background:#9CEB9C"></div>
<div class="a" style="left:134px;top:444px;width:9px;height:1px;background:#9CEB9C"></div>
<div class="a" style="left:134px;top:475px;width:9px;height:1px;background:#9CEB9C"></div>
<div class="a" style="left:134px;top:506px;width:9px;height:1px;background:#9CEB9C"></div>
<div class="a" style="left:134px;top:537px;width:9px;height:1px;background:#9CEB9C"></div>
<div class="a" style="left:134px;top:568px;width:9px;height:1px;background:#9CEB9C"></div>
<div class="a" style="left:134px;top:599px;width:9px;height:1px;background:#9CEB9C"></div>
<div class="a" style="left:164px;top:258px;width:874px;height:31px;border:2.6px solid #E6E7EF"></div>
<div class="a mono" style="left:67px;top:-19.7px;font-size:22.4px;line-height:31px;color:#0A5C55;text-align:right;width:30px">68</div>
<div class="a mono" style="left:67px;top:11.3px;font-size:22.4px;line-height:31px;color:#0A5C55;text-align:right;width:30px">69</div>
<div class="a mono" style="left:167px;top:9.9px;font-size:21.77px;line-height:31px;white-space:pre"><span style="color:#0000FF">void</span><span style="color:#000000"> </span><span style="color:#74531F">ThemDong</span><span style="color:#000000">(</span><span style="color:#0000FF">int</span><span style="color:#000000">**&amp; </span><span style="color:#7A7A7A">a</span><span style="color:#000000">, </span><span style="color:#0000FF">int</span><span style="color:#000000">&amp; </span><span style="color:#7A7A7A">m</span><span style="color:#000000">, </span><span style="color:#0000FF">int</span><span style="color:#000000"> </span><span style="color:#7A7A7A">n</span><span style="color:#000000">, </span><span style="color:#0000FF">int</span><span style="color:#000000"> </span><span style="color:#7A7A7A">vitrithem</span><span style="color:#000000">)</span></div>
<div class="a mono" style="left:67px;top:42.3px;font-size:22.4px;line-height:31px;color:#0A5C55;text-align:right;width:30px">70</div>
<div class="a mono" style="left:167px;top:40.9px;font-size:21.77px;line-height:31px;white-space:pre"><span style="color:#000000">{</span></div>
<div class="a mono" style="left:67px;top:73.3px;font-size:22.4px;line-height:31px;color:#0A5C55;text-align:right;width:30px">71</div>
<div class="a mono" style="left:167px;top:71.9px;font-size:21.77px;line-height:31px;white-space:pre"><span style="color:#000000">    </span><span style="color:#7A7A7A">m</span><span style="color:#000000">++;</span></div>
<div class="a mono" style="left:67px;top:104.3px;font-size:22.4px;line-height:31px;color:#0A5C55;text-align:right;width:30px">72</div>
<div class="a mono" style="left:167px;top:102.9px;font-size:21.77px;line-height:31px;white-space:pre"><span style="color:#000000">    </span><span style="color:#7A7A7A">a</span><span style="color:#000000"> = (</span><span style="color:#0000FF">int</span><span style="color:#000000">**)</span><span style="color:#74531F">realloc</span><span style="color:#000000">(</span><span style="color:#7A7A7A">a</span><span style="color:#000000">, </span><span style="color:#7A7A7A">m</span><span style="color:#000000"> * </span><span style="color:#0000FF">sizeof</span><span style="color:#000000">(</span><span style="color:#0000FF">int</span><span style="color:#000000">*));</span></div>
<div class="a mono" style="left:67px;top:135.3px;font-size:22.4px;line-height:31px;color:#0A5C55;text-align:right;width:30px">73</div>
<div class="a mono" style="left:167px;top:133.9px;font-size:21.77px;line-height:31px;white-space:pre"><span style="color:#000000">    </span><span style="color:#8F08C4">for</span><span style="color:#000000"> (</span><span style="color:#0000FF">int</span><span style="color:#000000"> </span><span style="color:#1F377F">i</span><span style="color:#000000"> = </span><span style="color:#7A7A7A">m</span><span style="color:#000000"> - 1 ; </span><span style="color:#1F377F">i</span><span style="color:#000000"> &gt; </span><span style="color:#7A7A7A">vitrithem</span><span style="color:#000000">; </span><span style="color:#1F377F">i</span><span style="color:#000000">--)</span></div>
<div class="a mono" style="left:67px;top:166.3px;font-size:22.4px;line-height:31px;color:#0A5C55;text-align:right;width:30px">74</div>
<div class="a mono" style="left:167px;top:164.9px;font-size:21.77px;line-height:31px;white-space:pre"><span style="color:#000000">    {</span></div>
<div class="a mono" style="left:67px;top:197.3px;font-size:22.4px;line-height:31px;color:#0A5C55;text-align:right;width:30px">75</div>
<div class="a mono" style="left:167px;top:195.9px;font-size:21.77px;line-height:31px;white-space:pre"><span style="color:#000000">        </span><span style="color:#8F08C4">for</span><span style="color:#000000"> (</span><span style="color:#0000FF">int</span><span style="color:#000000"> </span><span style="color:#1F377F">j</span><span style="color:#000000"> = 0; </span><span style="color:#1F377F">j</span><span style="color:#000000"> &lt; </span><span style="color:#7A7A7A">n</span><span style="color:#000000">; </span><span style="color:#1F377F">j</span><span style="color:#000000">++)</span></div>
<div class="a mono" style="left:67px;top:228.3px;font-size:22.4px;line-height:31px;color:#0A5C55;text-align:right;width:30px">76</div>
<div class="a mono" style="left:167px;top:226.9px;font-size:21.77px;line-height:31px;white-space:pre"><span style="color:#000000">        {</span></div>
<div class="a mono" style="left:67px;top:259.3px;font-size:22.4px;line-height:31px;color:#0A5C55;text-align:right;width:30px">77</div>
<div class="a mono" style="left:167px;top:257.9px;font-size:21.77px;line-height:31px;white-space:pre"><span style="color:#000000">            </span><span style="color:#7A7A7A">a</span><span style="color:#000000">[</span><span style="color:#1F377F">i</span><span style="color:#000000">][</span><span style="color:#1F377F">j</span><span style="color:#000000">] = </span><span style="color:#7A7A7A">a</span><span style="color:#000000">[</span><span style="color:#1F377F">i</span><span style="color:#000000"> - 1][</span><span style="color:#1F377F">j</span><span style="color:#000000">];</span></div>
<div class="a mono" style="left:67px;top:290.3px;font-size:22.4px;line-height:31px;color:#0A5C55;text-align:right;width:30px">78</div>
<div class="a mono" style="left:167px;top:288.9px;font-size:21.77px;line-height:31px;white-space:pre"><span style="color:#000000">        </span><span style="color:#0A5F58">//  *(*(a + i) + j) = *(*(a + i - 1) + j);</span></div>
<div class="a mono" style="left:67px;top:321.3px;font-size:22.4px;line-height:31px;color:#0A5C55;text-align:right;width:30px">79</div>
<div class="a mono" style="left:67px;top:352.3px;font-size:22.4px;line-height:31px;color:#0A5C55;text-align:right;width:30px">80</div>
<div class="a mono" style="left:67px;top:383.3px;font-size:22.4px;line-height:31px;color:#0A5C55;text-align:right;width:30px">81</div>
<div class="a mono" style="left:67px;top:414.3px;font-size:22.4px;line-height:31px;color:#0A5C55;text-align:right;width:30px">82</div>
<div class="a mono" style="left:67px;top:445.3px;font-size:22.4px;line-height:31px;color:#0A5C55;text-align:right;width:30px">83</div>
<div class="a mono" style="left:67px;top:476.3px;font-size:22.4px;line-height:31px;color:#0A5C55;text-align:right;width:30px">84</div>
<div class="a mono" style="left:167px;top:474.9px;font-size:21.77px;line-height:31px;white-space:pre"><span style="color:#000000">                                                       </span><span style="color:#A31515">"] : "</span><span style="color:#000000">;</span></div>
<div class="a mono" style="left:67px;top:507.3px;font-size:22.4px;line-height:31px;color:#0A5C55;text-align:right;width:30px">85</div>
<div class="a mono" style="left:67px;top:538.3px;font-size:22.4px;line-height:31px;color:#0A5C55;text-align:right;width:30px">86</div>
<div class="a mono" style="left:67px;top:569.3px;font-size:22.4px;line-height:31px;color:#0A5C55;text-align:right;width:30px">87</div>
<div class="a" style="left:155px;top:34px;width:2px;height:514px;background:#A8A8A8"></div>
<div class="a" style="left:147px;top:17px;width:17px;height:17px;border:1.5px solid #A8A8A8;background:#fff"></div>
<div class="a" style="left:150px;top:24px;width:11px;height:2px;background:#555"></div>
<div class="a" style="left:147px;top:141px;width:17px;height:17px;border:1.5px solid #A8A8A8;background:#fff"></div>
<div class="a" style="left:150px;top:148px;width:11px;height:2px;background:#555"></div>
<div class="a" style="left:147px;top:203px;width:17px;height:17px;border:1.5px solid #A8A8A8;background:#fff"></div>
<div class="a" style="left:150px;top:210px;width:11px;height:2px;background:#555"></div>
<div class="a" style="left:147px;top:420px;width:17px;height:17px;border:1.5px solid #A8A8A8;background:#fff"></div>
<div class="a" style="left:150px;top:427px;width:11px;height:2px;background:#555"></div>
<div class="a" style="left:155px;top:350px;width:9px;height:2px;background:#A8A8A8"></div>
<div class="a" style="left:155px;top:381px;width:9px;height:2px;background:#A8A8A8"></div>
<div class="a" style="left:171px;top:72px;width:2px;height:476px;background:repeating-linear-gradient(#555 0 6px,transparent 6px 10px)"></div>
<div class="a" style="left:224px;top:196px;width:2px;height:152px;background:repeating-linear-gradient(#555 0 6px,transparent 6px 10px)"></div>
<div class="a" style="left:276px;top:258px;width:2px;height:31px;background:repeating-linear-gradient(#555 0 6px,transparent 6px 10px)"></div>
<svg style="left:237px;top:296px" width="17" height="15" viewBox="0 0 17 15"><path d="M0 0 L11 7.5 L0 15 Z" fill="#68B36A"/><rect x="14" y="0" width="2" height="15" fill="#68B36A"/></svg>
<svg style="left:0;top:0" width="1039" height="548"><path d="M363 130 L366 127 L369 131 L372 127 L375 131 L378 127 L381 131 L384 127 L387 131 L390 127 L393 131 L396 127 L399 131 L402 127 L405 131 L408 127 L411 131 L414 127 L417 131 L420 127 L423 131 L426 127 L429 131 L432 127 L435 131 L438 127 L441 131 L444 127 L447 131 L450 127 L453 131 L456 127 L459 131 L462 127 L465 131 L468 127 L471 131 L474 127 L477 131 L480 127 L483 131 L486 127 L489 131 L492 127 L495 131 L498 127 L501 131 L504 127 L507 131 L510 127 L513 131 L516 127 L519 131 L522 127 L525 131 L528 127 L531 131 L534 127 L537 131 L540 127 L543 131 L546 127 L549 131 L552 127 L555 131 L558 127 L561 131 L564 127 L567 131 L570 127 L573 131 L576 127 L579 131 L582 127 L585 131 L588 127 L591 131 L594 127 L597 131 L600 127 L603 131 L606 127 L609 131 L612 127 L615 131 L618 127 L621 131 L624 127 L627 131 L630 127 L633 131 L636 127 L639 131 L642 127 L645 131 L648 127 L651 131 L654 127 L657 131 L660 127 L663 131 L666 127 L669 131 L672 127 L675 131 L678 127 L681 131 L684 127 L687 131 L690 127 L693 131 L696 127 L699 131 L702 127 L705 131 L708 127 L711 131 L714 127 L717 131 L720 127 L723 131 L726 127 L729 131" stroke="#36A536" stroke-width="1.4" fill="none"/></svg>
<svg style="left:637px;top:260px" width="27" height="27" viewBox="0 0 27 27"><circle cx="13.5" cy="13.5" r="13" fill="#E51400"/><path d="M6.5 6.5 L20.5 20.5 M20.5 6.5 L6.5 20.5" stroke="#fff" stroke-width="3"/></svg>
<svg style="left:0;top:0" width="1039" height="548"><path d="M626 312 L649 290 L649 312 Z" fill="#C9D3EF" stroke="#B4C0E4" stroke-width="1"/></svg>
<div class="a" style="left:164px;top:311px;width:728px;height:247px;background:#F6F8FD;border-left:1px solid #C9D3EF;border-right:1.5px solid #B9C5E7"></div>
<div class="a" style="left:164px;top:311px;width:728px;height:42px;background:#C9D3EF"></div>
<div class="a" style="left:182px;top:322px;font-size:21.5px;line-height:22px;color:#1E1E1E;white-space:nowrap">Exception Thrown</div>
<svg style="left:828px;top:322px" width="12" height="20" viewBox="0 0 12 20"><path d="M2.5 1 H9.5 V11 H2.5 Z M0 12 H12 M6 12 V20" stroke="#333" stroke-width="2" fill="none"/><path d="M7 2 V11" stroke="#333" stroke-width="1.5"/></svg>
<svg style="left:861px;top:322px" width="24" height="20" viewBox="0 0 24 20"><path d="M2 1 L22 19 M22 1 L2 19" stroke="#333" stroke-width="3.2"/></svg>
<div class="a" style="left:183px;top:376px;font-size:21.5px;line-height:22px;color:#000;white-space:nowrap">Exception thrown at 0x01006B90 in Nhập, Xuất Mảng 2 Chiều.exe:</div>
<div class="a" style="left:183px;top:405px;font-size:21.3px;line-height:22px;color:#000;white-space:nowrap">0xC0000005: Access violation writing location 0xCDCDCDCD.</div>
<div class="a" style="left:183px;top:532px;font-size:21px;line-height:22px;color:#0E70C0;white-space:nowrap">Copy Details</div>
<div class="a" style="left:316px;top:528px;width:2px;height:25px;background:#555"></div>
<div class="a" style="left:328px;top:532px;font-size:21px;line-height:22px;color:#0E70C0;white-space:nowrap">Start Live Share session</div>
</div>
<div class="a" style="left:1496px;top:175px;width:24px;height:548px;background:#E8E8EC"></div>
<div class="a" style="left:1496px;top:175px;width:24px;height:20px;background:#EEF1FA;border:1px solid #C5CEE8"></div>
<svg style="left:1500px;top:178px" width="16" height="15" viewBox="0 0 16 15"><path d="M1 6.5 H15 M1 8.5 H15 M8 1 V5 M8 10 V14 M5.5 3.5 L8 1 L10.5 3.5 M5.5 11.5 L8 14 L10.5 11.5" stroke="#333" stroke-width="1.2" fill="none"/></svg>
<div class="a" style="left:1503px;top:204px;border-left:5.5px solid transparent;border-right:5.5px solid transparent;border-bottom:5px solid #9296A8"></div>
<div class="a" style="left:1503px;top:709px;border-left:5.5px solid transparent;border-right:5.5px solid transparent;border-top:5px solid #9296A8"></div>
<div class="a" style="left:1503px;top:348px;width:12px;height:164px;background:#C2C3C9"></div>
<div class="a" style="left:1498px;top:217px;width:5px;height:329px;background:#6CE26C"></div>
<div class="a" style="left:1513px;top:296px;width:6px;height:6px;background:#008000"></div>
<div class="a" style="left:1513px;top:315px;width:6px;height:6px;background:#008000"></div>
<div class="a" style="left:1513px;top:378px;width:6px;height:6px;background:#008000"></div>
<div class="a" style="left:1513px;top:434px;width:6px;height:6px;background:#008000"></div>
<div class="a" style="left:1513px;top:499px;width:6px;height:6px;background:#008000"></div>
<div class="a" style="left:1496px;top:428px;width:24px;height:2px;background:#0000E0"></div>
<div class="a" style="left:457px;top:723px;width:1063px;height:21px;background:#E6E7EC"></div>
<div class="a" style="left:457px;top:723px;width:75px;height:21px;background:#FCFCFD;border:1px solid #C5CEE8"></div>
<div class="t" style="left:461px;top:727px">146 %</div>
<div class="dd" style="left:520px;top:732px;border-left-width:3.5px;border-right-width:3.5px"></div>
<svg style="left:565px;top:726px" width="15" height="15" viewBox="0 0 15 15"><circle cx="7.5" cy="7.5" r="7.2" fill="#E51400"/><path d="M4.6 4.6 L10.4 10.4 M10.4 4.6 L4.6 10.4" stroke="#fff" stroke-width="2.2"/></svg>
<div class="t" style="left:586px;top:727px">0</div>
<svg style="left:623px;top:726px" width="15" height="14" viewBox="0 0 15 14"><path d="M7.5 0 L15 14 H0 Z" fill="#FFCC00"/><path d="M7.5 4 V9 M7.5 10.5 V12.5" stroke="#1E1E1E" stroke-width="1.8"/></svg>
<div class="t" style="left:643px;top:727px">6</div>
<svg style="left:690px;top:727px" width="16" height="13" viewBox="0 0 16 13"><path d="M15 6.5 H2 M7 1 L1.5 6.5 L7 12" stroke="#1E5BA8" stroke-width="2" fill="none"/></svg>
<svg style="left:725px;top:727px" width="16" height="13" viewBox="0 0 16 13"><path d="M1 6.5 H14 M9 1 L14.5 6.5 L9 12" stroke="#1E5BA8" stroke-width="2" fill="none"/></svg>
<div class="a" style="left:782px;top:728px;border-top:5.5px solid transparent;border-bottom:5.5px solid transparent;border-right:5px solid #9296A8"></div>
<div class="a" style="left:796px;top:728px;width:338px;height:11px;background:#C2C3C9"></div>
<div class="a" style="left:1264px;top:728px;border-top:5.5px solid transparent;border-bottom:5.5px solid transparent;border-left:5px solid #9296A8"></div>
<div class="t" style="left:1305px;top:727px;letter-spacing:-0.6px">Ln: 77</div>
<div class="t" style="left:1366px;top:727px;letter-spacing:-0.4px">Ch: 1</div>
<div class="t" style="left:1422px;top:727px;letter-spacing:-1.5px">TABS</div>
<div class="t" style="left:1477px;top:727px;letter-spacing:-1.7px">CRLF</div>

<div class="a" style="left:1530px;top:119px;width:382px;height:27px;background:#40508D"></div>
<div class="t" style="left:1535px;top:126px;color:#fff">Diagnostic Tools</div>
<div class="dd" style="left:1850px;top:129px;border-top-color:#A9B5E0;border-left-width:5px;border-right-width:5px;border-top-width:5px"></div>
<svg style="left:1870px;top:125px" width="11" height="15" viewBox="0 0 11 15"><path d="M2.5 0.5 H8.5 V8 H2.5 Z M0 8.5 H11 M5.5 9 V15 M6.5 1 V8" stroke="#B9C3E8" stroke-width="1.3" fill="none"/></svg>
<svg style="left:1891px;top:127px" width="12" height="11" viewBox="0 0 12 11"><path d="M0.5 0.5 L11.5 10.5 M11.5 0.5 L0.5 10.5" stroke="#B9C3E8" stroke-width="1.4"/></svg>
<div class="a" style="left:1530px;top:145px;width:382px;height:599px;background:#F6F8FD"></div>
<div class="a" style="left:1530px;top:146px;width:362px;height:34px;background:#CCD5F0"></div>
<svg style="left:1543px;top:153px" width="18" height="18" viewBox="0 0 18 18"><path d="M9 0.5 L10.6 0.8 L11 3.2 L12.9 4 L14.9 2.6 L16.1 3.8 L14.7 5.8 L15.5 7.6 L17.6 8.2 V9.8 L15.5 10.4 L14.7 12.2 L16.1 14.2 L14.9 15.4 L12.9 14 L11 14.8 L10.6 17.2 H7.4 L7 14.8 L5.1 14 L3.1 15.4 L1.9 14.2 L3.3 12.2 L2.5 10.4 L0.4 9.8 V8.2 L2.5 7.6 L3.3 5.8 L1.9 3.8 L3.1 2.6 L5.1 4 L7 3.2 L7.4 0.8 Z" fill="#333"/><circle cx="9" cy="9" r="2.8" fill="#CCD5F0"/></svg>
<div class="sep" style="left:1575px;top:149px;height:27px"></div>
<svg style="left:1585px;top:153px" width="20" height="19" viewBox="0 0 20 19"><path d="M12 1 H1 V18 H12" stroke="#424242" stroke-width="1.6" fill="none"/><path d="M5 9.5 H16 M12 5 L16.5 9.5 L12 14" stroke="#1E6BC0" stroke-width="2.4" fill="none"/></svg>
<div class="sep" style="left:1618px;top:149px;height:27px"></div>
<svg style="left:1628px;top:152px" width="18" height="19" viewBox="0 0 18 19"><circle cx="7" cy="7" r="5.8" fill="none" stroke="#333" stroke-width="1.6"/><path d="M11 11 L16.5 16.5" stroke="#333" stroke-width="2.6" stroke-linecap="round"/><path d="M7 4 V10 M4 7 H10" stroke="#1E6BC0" stroke-width="1.4"/></svg>
<svg style="left:1660px;top:153px" width="18" height="19" viewBox="0 0 18 19"><circle cx="7" cy="7" r="5.8" fill="none" stroke="#333" stroke-width="1.6"/><path d="M11 11 L16.5 16.5" stroke="#333" stroke-width="2.6" stroke-linecap="round"/><path d="M4 7 H10" stroke="#1E6BC0" stroke-width="1.4"/></svg>
<svg style="left:1690px;top:152px" width="19" height="20" viewBox="0 0 19 20"><path d="M1 4 Q1 1 4 1 Q7 1 7 4 Q7 6 4.5 7 V8" stroke="#1E6BC0" stroke-width="1.5" fill="none"/><rect x="3" y="12" width="3" height="7" fill="#333"/><rect x="8" y="7" width="3" height="12" fill="#333"/><rect x="13" y="10" width="3" height="9" fill="#333"/></svg>
<div class="t" style="left:1543px;top:185px;color:#000">Diagnostics session: 8 seconds (8.5 s selected)</div>
<div class="a" style="left:1530px;top:206px;width:362px;height:1px;background:#D5D9E6"></div>
<div class="a" style="left:1530px;top:234px;width:362px;height:1px;background:#D5D9E6"></div>
<div class="a" style="left:1714px;top:207px;width:131px;height:27px;background:#DFDFE3"></div>
<div class="a" style="left:1731px;top:207px;width:1px;height:27px;background:#CFD0D8"></div>
<div class="a" style="left:1844px;top:207px;width:1px;height:27px;background:#D5D7E2"></div>
<div class="a" style="left:1570px;top:207px;width:6px;height:27px;background:#1E1E1E"></div>
<div class="a" style="left:1708px;top:207px;width:6px;height:27px;background:#1E1E1E"></div>
<div class="a" style="left:1608px;top:229px;width:1px;height:5px;background:#C8CAD4"></div>
<div class="a" style="left:1639px;top:229px;width:1px;height:5px;background:#C8CAD4"></div>
<div class="a" style="left:1669px;top:229px;width:1px;height:5px;background:#C8CAD4"></div>
<div class="a" style="left:1700px;top:229px;width:1px;height:5px;background:#C8CAD4"></div>
<div class="a" style="left:1763px;top:229px;width:1px;height:5px;background:#C8CAD4"></div>
<div class="a" style="left:1794px;top:229px;width:1px;height:5px;background:#C8CAD4"></div>
<div class="a" style="left:1825px;top:229px;width:1px;height:5px;background:#C8CAD4"></div>
<div class="t" style="left:1735px;top:210px;color:#7A7A7A;font-size:14px">10s</div>
<svg style="left:1537px;top:244px" width="9" height="9"><path d="M9 0 V9 H0 Z" fill="#555"/></svg>
<div class="t" style="left:1552px;top:242px;color:#000">Events</div>
<div class="a" style="left:1575px;top:261px;width:271px;height:29px;background:#DFDFE3;border:1px solid #D0D3E0"></div>
<div class="a" style="left:1576px;top:262px;width:132px;height:27px;background:#F6F8FD"></div>
<div class="a" style="left:1731px;top:262px;width:1px;height:27px;background:#CFD0D8"></div>
<div class="a" style="left:1576px;top:268px;width:130px;height:17px;background:#707070"></div>
<div class="a" style="left:1553px;top:268px;width:4px;height:12px;background:#333"></div>
<div class="a" style="left:1560px;top:268px;width:4px;height:12px;background:#333"></div>
<svg style="left:1537px;top:298px" width="9" height="9"><path d="M9 0 V9 H0 Z" fill="#555"/></svg>
<div class="t" style="left:1552px;top:296px;color:#000">Process Memory (KB)</div>
<svg style="left:1797px;top:295px" width="16" height="13"><path d="M0 0 H15.5 L7.75 13 Z" fill="#1374D0"/></svg>
<div class="a" style="left:1828px;top:294.5px;width:15px;height:15px;border-radius:50%;background:#78ADC8"></div>
<div class="a" style="left:1575px;top:315px;width:271px;height:87px;background:#DFDFE3;border:1px solid #D0D3E0"></div>
<div class="a" style="left:1576px;top:316px;width:132px;height:85px;background:#F6F8FD"></div>
<div class="a" style="left:1731px;top:316px;width:1px;height:85px;background:#CFD0D8"></div>
<div class="a" style="left:1577px;top:323px;width:130px;height:78px;background:#A3C7DA;border-top:1.5px solid #86B6CC"></div>
<div class="t" style="left:1545px;top:318px;color:#000;letter-spacing:-0.3px">902</div>
<div class="t" style="left:1852px;top:318px;color:#000;letter-spacing:-0.3px">902</div>
<div class="t" style="left:1560px;top:386px;color:#000">0</div>
<div class="t" style="left:1852px;top:386px;color:#000">0</div>
<svg style="left:1537px;top:411px" width="9" height="9"><path d="M9 0 V9 H0 Z" fill="#555"/></svg>
<div class="t" style="left:1552px;top:408px;color:#000;letter-spacing:-0.2px">CPU (% of all processors)</div>
<div class="a" style="left:1575px;top:427px;width:271px;height:80px;background:#DFDFE3;border:1px solid #D0D3E0"></div>
<div class="a" style="left:1576px;top:428px;width:132px;height:80px;background:#F6F8FD"></div>
<div class="a" style="left:1731px;top:428px;width:1px;height:80px;background:#CFD0D8"></div>
<div class="t" style="left:1545px;top:431px;color:#000;letter-spacing:-0.3px">100</div>
<div class="t" style="left:1852px;top:431px;color:#000;letter-spacing:-0.3px">100</div>
<div class="t" style="left:1560px;top:496px;color:#000">0</div>
<div class="t" style="left:1852px;top:496px;color:#000">0</div>
<div class="a" style="left:1892px;top:145px;width:20px;height:357px;background:#E8E8EC"></div>
<div class="a" style="left:1893px;top:180px;width:17px;height:261px;background:#C2C3C9"></div>
<svg style="left:1893px;top:160px" width="17" height="12"><path d="M1.5 10.5 L8.5 3 L15.5 10.5" stroke="#8A8FA8" stroke-width="2.6" fill="none"/></svg>
<svg style="left:1893px;top:474px" width="17" height="12"><path d="M1.5 1.5 L8.5 9 L15.5 1.5" stroke="#8A8FA8" stroke-width="2.6" fill="none"/></svg>
<div class="a" style="left:1530px;top:501px;width:382px;height:5px;background:#D5D7DF"></div>
<div class="a" style="left:1530px;top:506px;width:382px;height:31px;background:#FFFFFF"></div>
<div class="a" style="left:1535px;top:511px;width:76px;height:24px;background:#DDE3F3"></div>
<div class="t" style="left:1542px;top:516px;letter-spacing:-0.3px">Summary</div>
<div class="t" style="left:1619px;top:516px;letter-spacing:-0.3px">Events</div>
<div class="t" style="left:1674px;top:516px;letter-spacing:-0.3px">Memory Usage</div>
<div class="t" style="left:1788px;top:516px;letter-spacing:-0.3px">CPU Usage</div>
<div class="a" style="left:1530px;top:535px;width:382px;height:2px;background:#D9DFF0"></div>
<div class="a" style="left:1530px;top:537px;width:362px;height:30px;background:#F3F3F3;border-bottom:1px solid #D2D5DE"></div>
<div class="t" style="left:1542px;top:545px;font-weight:bold;color:#000;letter-spacing:-0.3px">Events</div>
<svg style="left:1550px;top:581px" width="15" height="7" viewBox="0 0 15 7"><path d="M0.8 3.5 L3 1 L5.2 3.5 L3 6 Z" fill="none" stroke="#444" stroke-width="1"/><path d="M6.5 1 L9 3.5 L6.5 6 M10.5 1 L13 3.5 L10.5 6" stroke="#444" stroke-width="1.1" fill="none"/></svg>
<div class="t" style="left:1575px;top:578px;letter-spacing:-0.2px">Show Events (1 of 1)</div>
<div class="a" style="left:1530px;top:601px;width:362px;height:1px;background:#D2D5DE"></div>
<div class="a" style="left:1530px;top:602px;width:362px;height:29px;background:#F3F3F3;border-bottom:1px solid #D2D5DE"></div>
<div class="t" style="left:1542px;top:610px;font-weight:bold;color:#000;letter-spacing:-0.3px">Memory Usage</div>
<svg style="left:1549px;top:645px" width="16" height="12" viewBox="0 0 16 12"><path d="M0 2.5 H4 L5 0.5 H11 L12 2.5 H16 V12 H0 Z" fill="#444"/><circle cx="8" cy="7" r="2.8" fill="#F6F8FD"/><circle cx="8" cy="7" r="1.4" fill="#444"/></svg>
<div class="t" style="left:1575px;top:643px;color:#717171;letter-spacing:-0.2px">Take Snapshot</div>
<svg style="left:1550px;top:678px" width="15" height="13" viewBox="0 0 15 13"><rect x="1" y="2.5" width="13" height="8" fill="none" stroke="#444" stroke-width="1.3"/><rect x="3" y="5" width="9" height="3" fill="#444"/><path d="M3 0 V2.5 M5.5 0 V2.5 M8 0 V2.5 M10.5 0 V2.5 M3 10.5 V13 M5.5 10.5 V13 M8 10.5 V13 M10.5 10.5 V13" stroke="#444" stroke-width="1"/></svg>
<div class="t" style="left:1575px;top:677px;letter-spacing:-0.15px">Enable heap profiling (affects performance)</div>
<div class="a" style="left:1530px;top:701px;width:362px;height:1px;background:#D2D5DE"></div>
<div class="a" style="left:1530px;top:702px;width:362px;height:29px;background:#F3F3F3;border-bottom:1px solid #D2D5DE"></div>
<div class="t" style="left:1542px;top:710px;font-weight:bold;color:#000;letter-spacing:-0.3px">CPU Usage</div>
<div class="a" style="left:1892px;top:537px;width:20px;height:207px;background:#E8E8EC"></div>
<div class="a" style="left:1893px;top:580px;width:17px;height:109px;background:#C2C3C9"></div>
<svg style="left:1893px;top:555px" width="17" height="12"><path d="M1.5 10.5 L8.5 3 L15.5 10.5" stroke="#8A8FA8" stroke-width="2.6" fill="none"/></svg>
<svg style="left:1893px;top:710px" width="17" height="12"><path d="M1.5 1.5 L8.5 9 L15.5 1.5" stroke="#8A8FA8" stroke-width="2.6" fill="none"/></svg>

<div class="a" style="left:457px;top:754px;width:718px;height:27px;background:#40508D"></div>
<div class="t" style="left:461px;top:761px;color:#fff">Autos</div>
<div class="dd" style="left:1113px;top:764px;border-top-color:#A9B5E0;border-left-width:5px;border-right-width:5px;border-top-width:5px"></div>
<svg style="left:1133px;top:760px" width="11" height="15" viewBox="0 0 11 15"><path d="M2.5 0.5 H8.5 V8 H2.5 Z M0 8.5 H11 M5.5 9 V15 M6.5 1 V8" stroke="#B9C3E8" stroke-width="1.3" fill="none"/></svg>
<svg style="left:1154px;top:762px" width="12" height="11" viewBox="0 0 12 11"><path d="M0.5 0.5 L11.5 10.5 M11.5 0.5 L0.5 10.5" stroke="#B9C3E8" stroke-width="1.4"/></svg>
<div class="a" style="left:457px;top:781px;width:718px;height:32px;background:#CCD5F0"></div>
<div class="a" style="left:457px;top:782px;width:281px;height:27px;background:#FCFCFD;border:1px solid #C5CEE8"></div>
<div class="t" style="left:463px;top:790px;color:#717171">Search (Ctrl+E)</div>
<svg style="left:703px;top:787px" width="16" height="17" viewBox="0 0 16 17"><circle cx="10.5" cy="6" r="4.3" fill="none" stroke="#555" stroke-width="1.8"/><path d="M7.5 9 L1.5 15" stroke="#555" stroke-width="2.6" stroke-linecap="round"/></svg>
<div class="dd" style="left:725px;top:794px;border-top-color:#555;border-left-width:3.5px;border-right-width:3.5px"></div>
<svg style="left:748px;top:787px" width="18" height="13" viewBox="0 0 18 13"><path d="M17 6.5 H2 M7.5 1 L2 6.5 L7.5 12" stroke="#A9AFC6" stroke-width="1.8" fill="none"/></svg>
<svg style="left:774px;top:787px" width="18" height="13" viewBox="0 0 18 13"><path d="M1 6.5 H16 M10.5 1 L16 6.5 L10.5 12" stroke="#A9AFC6" stroke-width="1.8" fill="none"/></svg>
<div class="t" style="left:801px;top:791px;letter-spacing:-0.35px">Search Depth:</div>
<div class="combo" style="left:901px;top:784px;width:49px;height:24px"><span style="left:6px;top:4px">3</span><i style="left:38px;top:10px"></i></div>
<div class="a" style="left:457px;top:813px;width:697px;height:155px;background:#FFFFFF"></div>
<div class="a" style="left:457px;top:836px;width:697px;height:2px;background:#C7D0EB"></div>
<div class="a" style="left:467px;top:813px;width:1px;height:23px;background:#C7D0EB"></div>
<div class="a" style="left:696px;top:813px;width:1px;height:23px;background:#C7D0EB"></div>
<div class="a" style="left:1039px;top:813px;width:1px;height:23px;background:#C7D0EB"></div>
<div class="t" style="left:473px;top:819px;letter-spacing:-0.2px">Name</div>
<div class="t" style="left:702px;top:819px;letter-spacing:-0.2px">Value</div>
<div class="t" style="left:1045px;top:819px;letter-spacing:-0.2px">Type</div>
<div class="a" style="left:489px;top:838px;width:664px;height:21px;background:#EFEFF2"></div>
<svg width="0" height="0" style="position:absolute"><defs><g id="cube"><path d="M0.5 4 L7 1 L13.5 3.5 V9 L7 12 L0.5 9.5 Z" fill="#0E5AB4"/><path d="M1.5 4.2 L7 1.8 L12.2 3.7 L6.6 6.2 Z" fill="#F0F4FA"/></g></defs></svg>
<div class="a" style="left:468px;top:859px;width:685px;height:1px;background:#E8E8EC"></div>
<div class="a" style="left:696px;top:838px;width:1px;height:21px;background:#E8E8EC"></div>
<div class="a" style="left:1039px;top:838px;width:1px;height:21px;background:#E8E8EC"></div>
<svg style="left:475px;top:844px" width="7" height="10"><path d="M0.7 0.7 L5.5 4.7 L0.7 8.7 Z" fill="none" stroke="#333" stroke-width="1.2"/></svg>
<svg style="left:491px;top:842px" width="14" height="13"><use href="#cube"/></svg>
<div class="t" style="left:514px;top:842px">a</div>
<div class="t" style="left:701px;top:842px;letter-spacing:-0.25px">0x01725848 {0x01729d98 {1}}</div>
<div class="t" style="left:1044px;top:842px">int * * &amp;</div>
<div class="a" style="left:468px;top:880px;width:685px;height:1px;background:#E8E8EC"></div>
<div class="a" style="left:696px;top:859px;width:1px;height:21px;background:#E8E8EC"></div>
<div class="a" style="left:1039px;top:859px;width:1px;height:21px;background:#E8E8EC"></div>
<svg style="left:475px;top:865px" width="7" height="10"><path d="M0.7 0.7 L5.5 4.7 L0.7 8.7 Z" fill="none" stroke="#333" stroke-width="1.2"/></svg>
<svg style="left:491px;top:863px" width="14" height="13"><use href="#cube"/></svg>
<div class="t" style="left:514px;top:863px">a[i-1]</div>
<div class="t" style="left:701px;top:863px;letter-spacing:-0.25px">0x0172a1c0 {5}</div>
<div class="t" style="left:1044px;top:863px">int *</div>
<div class="a" style="left:468px;top:901px;width:685px;height:1px;background:#E8E8EC"></div>
<div class="a" style="left:696px;top:880px;width:1px;height:21px;background:#E8E8EC"></div>
<div class="a" style="left:1039px;top:880px;width:1px;height:21px;background:#E8E8EC"></div>
<svg style="left:491px;top:884px" width="14" height="13"><use href="#cube"/></svg>
<div class="t" style="left:514px;top:884px">a[i-1][j]</div>
<div class="t" style="left:701px;top:884px;letter-spacing:-0.25px">5</div>
<div class="t" style="left:1044px;top:884px">int</div>
<div class="a" style="left:468px;top:922px;width:685px;height:1px;background:#E8E8EC"></div>
<div class="a" style="left:696px;top:901px;width:1px;height:21px;background:#E8E8EC"></div>
<div class="a" style="left:1039px;top:901px;width:1px;height:21px;background:#E8E8EC"></div>
<svg style="left:475px;top:907px" width="7" height="10"><path d="M0.7 0.7 L5.5 4.7 L0.7 8.7 Z" fill="none" stroke="#333" stroke-width="1.2"/></svg>
<svg style="left:491px;top:905px" width="14" height="13"><use href="#cube"/></svg>
<div class="t" style="left:514px;top:905px">a[i]</div>
<div class="t" style="left:701px;top:905px;letter-spacing:-0.25px">0xcdcdcdcd {???}</div>
<div class="t" style="left:1044px;top:905px">int *</div>
<div class="a" style="left:468px;top:943px;width:685px;height:1px;background:#E8E8EC"></div>
<div class="a" style="left:696px;top:922px;width:1px;height:21px;background:#E8E8EC"></div>
<div class="a" style="left:1039px;top:922px;width:1px;height:21px;background:#E8E8EC"></div>
<svg style="left:491px;top:926px" width="14" height="13"><use href="#cube"/></svg>
<div class="t" style="left:514px;top:926px">j</div>
<div class="t" style="left:701px;top:926px;letter-spacing:-0.25px">0</div>
<div class="t" style="left:1044px;top:926px">int</div>
<div class="a" style="left:468px;top:964px;width:685px;height:1px;background:#E8E8EC"></div>
<div class="a" style="left:696px;top:943px;width:1px;height:21px;background:#E8E8EC"></div>
<div class="a" style="left:1039px;top:943px;width:1px;height:21px;background:#E8E8EC"></div>
<svg style="left:491px;top:947px" width="14" height="13"><use href="#cube"/></svg>
<div class="t" style="left:514px;top:947px">n</div>
<div class="t" style="left:701px;top:947px;letter-spacing:-0.25px">2</div>
<div class="t" style="left:1044px;top:947px">int</div>
<div class="a" style="left:1154px;top:813px;width:21px;height:155px;background:#E8E8EC"></div>
<div class="a" style="left:1158px;top:822px;border-left:6px solid transparent;border-right:6px solid transparent;border-bottom:5px solid #C9CBD6"></div>
<div class="a" style="left:1158px;top:954px;border-left:6px solid transparent;border-right:6px solid transparent;border-top:5px solid #C9CBD6"></div>
<div class="a" style="left:457px;top:968px;width:50px;height:24px;background:#F6F8FD"></div>
<div class="t" style="left:463px;top:974px;letter-spacing:-0.3px">Autos</div>
<div class="a" style="left:509px;top:969px;width:53px;height:22px;background:#40508D"></div>
<div class="t" style="left:515px;top:974px;color:#E6EAF8;letter-spacing:-0.3px">Locals</div>
<div class="a" style="left:564px;top:969px;width:64px;height:22px;background:#40508D"></div>
<div class="t" style="left:570px;top:974px;color:#E6EAF8;letter-spacing:-0.3px">Threads</div>
<div class="a" style="left:630px;top:969px;width:68px;height:22px;background:#40508D"></div>
<div class="t" style="left:636px;top:974px;color:#E6EAF8;letter-spacing:-0.3px">Modules</div>
<div class="a" style="left:700px;top:969px;width:66px;height:22px;background:#40508D"></div>
<div class="t" style="left:706px;top:974px;color:#E6EAF8;letter-spacing:-0.3px">Watch 1</div>

<div class="a" style="left:1185px;top:754px;width:726px;height:27px;background:#40508D"></div>
<div class="t" style="left:1189px;top:761px;color:#fff">Breakpoints</div>
<div class="dd" style="left:1849px;top:764px;border-top-color:#A9B5E0;border-left-width:5px;border-right-width:5px;border-top-width:5px"></div>
<svg style="left:1869px;top:760px" width="11" height="15" viewBox="0 0 11 15"><path d="M2.5 0.5 H8.5 V8 H2.5 Z M0 8.5 H11 M5.5 9 V15 M6.5 1 V8" stroke="#B9C3E8" stroke-width="1.3" fill="none"/></svg>
<svg style="left:1890px;top:762px" width="12" height="11" viewBox="0 0 12 11"><path d="M0.5 0.5 L11.5 10.5 M11.5 0.5 L0.5 10.5" stroke="#B9C3E8" stroke-width="1.4"/></svg>
<div class="a" style="left:1185px;top:781px;width:726px;height:32px;background:#CCD5F0"></div>
<div class="t" style="left:1194px;top:790px">New</div>
<div class="dd" style="left:1228px;top:796px"></div>
<div class="sep" style="left:1246px;top:785px;height:22px"></div>
<svg style="left:1258px;top:789px" width="14" height="14"><path d="M1 1 L13 13 M13 1 L1 13" stroke="#A9AFC6" stroke-width="1.8"/></svg>
<div class="sep" style="left:1283px;top:785px;height:22px"></div>
<svg style="left:1293px;top:787px" width="19" height="17" viewBox="0 0 19 17"><circle cx="5.5" cy="11" r="5.2" fill="#A9AFC6"/><circle cx="12.5" cy="6" r="5.2" fill="#A9AFC6"/><path d="M1 0.5 L6 5.5 M6 0.5 L1 5.5" stroke="#A9AFC6" stroke-width="1.4"/></svg>
<svg style="left:1320px;top:787px" width="18" height="17" viewBox="0 0 18 17"><circle cx="5.5" cy="11" r="5.2" fill="#A9AFC6"/><circle cx="12" cy="6" r="4.6" fill="none" stroke="#A9AFC6" stroke-width="1.5"/></svg>
<div class="sep" style="left:1347px;top:785px;height:22px"></div>
<svg style="left:1357px;top:787px" width="18" height="16" viewBox="0 0 18 16"><path d="M2 15 Q1 6 9 6 H15 M11.5 2 L16 6 L11.5 10" stroke="#A9AFC6" stroke-width="1.9" fill="none"/></svg>
<svg style="left:1385px;top:788px" width="16" height="16" viewBox="0 0 16 16"><path d="M8 1.5 Q2 1.5 2 6.5 Q2 11 9 11 H13 M10 7.5 L14 11 L10 14.5" stroke="#0E5AB4" stroke-width="2.4" fill="none"/></svg>
<div class="sep" style="left:1411px;top:785px;height:22px"></div>
<svg style="left:1421px;top:787px" width="19" height="17" viewBox="0 0 19 17"><path d="M0 2 H5 M3 0 L5.5 2 L3 4 M8 1.5 H18 M8 6 H18 M5 10.5 H18 M5 15 H18" stroke="#A9AFC6" stroke-width="1.7" fill="none"/></svg>
<svg style="left:1447px;top:787px" width="19" height="17" viewBox="0 0 19 17"><path d="M1 3 V13 H5 M3 11 L5.5 13 L3 15 M8 1.5 H18 M8 6 H18 M8 10.5 H18 M8 15 H18" stroke="#A9AFC6" stroke-width="1.7" stroke-dasharray="3 1" fill="none"/></svg>
<div class="sep" style="left:1475px;top:785px;height:22px"></div>
<div class="t" style="left:1485px;top:790px;letter-spacing:-0.3px">Show Columns</div>
<div class="dd" style="left:1585px;top:796px"></div>
<div class="sep" style="left:1604px;top:785px;height:22px"></div>
<div class="t" style="left:1614px;top:790px;color:#7D8296;letter-spacing:-0.3px">Search:</div>
<div class="combo dis" style="left:1669px;top:784px;width:200px;height:25px"><i style="left:186px;top:10px"></i></div>
<svg style="left:1901px;top:787px" width="8" height="5"><path d="M0 0 L2.5 2.5 L0 5 Z M5 0 L7.5 2.5 L5 5 Z" fill="#333"/></svg>
<div class="a" style="left:1185px;top:813px;width:726px;height:155px;background:#FFFFFF"></div>
<div class="a" style="left:1185px;top:813px;width:726px;height:25px;background:#F5F5F5;border-bottom:1.5px solid #D5D8E0"></div>
<div class="a" style="left:1377px;top:813px;width:1px;height:25px;background:#DADCE2"></div>
<div class="a" style="left:1433px;top:813px;width:1px;height:25px;background:#DADCE2"></div>
<div class="a" style="left:1510px;top:813px;width:1px;height:25px;background:#DADCE2"></div>
<div class="a" style="left:1607px;top:813px;width:1px;height:25px;background:#DADCE2"></div>
<div class="t" style="left:1190px;top:819px;letter-spacing:-0.2px">Name</div>
<div class="t" style="left:1383px;top:819px;letter-spacing:-0.3px">Labels</div>
<div class="t" style="left:1439px;top:819px;letter-spacing:-0.3px">Condition</div>
<div class="t" style="left:1516px;top:819px;letter-spacing:-0.3px">Hit Count</div>
<div class="a" style="left:1185px;top:968px;width:90px;height:24px;background:#F6F8FD"></div>
<div class="t" style="left:1191px;top:974px;letter-spacing:-0.3px">Breakpoints</div>
<div class="a" style="left:1276px;top:969px;width:134px;height:22px;background:#40508D"></div>
<div class="t" style="left:1282px;top:974px;color:#E6EAF8;letter-spacing:-0.3px">Exception Settings</div>
<div class="a" style="left:1412px;top:969px;width:58px;height:22px;background:#40508D"></div>
<div class="t" style="left:1418px;top:974px;color:#E6EAF8;letter-spacing:-0.3px">Output</div>

<!-- ===== STATUS BAR ===== -->
<div class="a" style="left:0;top:1000px;width:1920px;height:30px;background:#A34A40"></div>
<svg style="left:5px;top:1008px" width="20" height="15" viewBox="0 0 20 15"><path d="M4.5 1 H19 L15.5 14 H1 Z" fill="none" stroke="#F4E6E3" stroke-width="1.5"/></svg>
<div class="t" style="left:35px;top:1008px;color:#fff">Ready</div>
<svg style="left:1658px;top:1009px" width="12" height="14" viewBox="0 0 12 14"><path d="M6 14 V2 M1 6.5 L6 1.5 L11 6.5" stroke="#F0E0DC" stroke-width="2" fill="none"/></svg>
<div class="t" style="left:1681px;top:1008px;color:#fff;letter-spacing:0.2px">Add to Source Control</div>
<div class="a" style="left:1837px;top:1013px;border-left:5px solid transparent;border-right:5px solid transparent;border-bottom:5px solid #fff"></div>
<svg style="left:1871px;top:1004px" width="28" height="26" viewBox="0 0 28 26"><path d="M2 15 Q4 13 4 8 Q4 2 9 2 Q14 2 14 8 Q14 13 16 15 Z M7 16 Q9 19 11 16" fill="#D8C4C0"/><circle cx="19" cy="16" r="7" fill="#fff"/><text x="19" y="20.5" font-size="11" text-anchor="middle" fill="#1E3A6E" font-family="Liberation Sans">1</text></svg>
<!-- ===== TASKBAR ===== -->
<div class="a" style="left:0;top:1030px;width:1920px;height:50px;background:linear-gradient(90deg,#4B1F2E 0px,#4A1E2A 300px,#481D25 520px,#43282A 680px,#45302A 900px,#472B22 1100px,#452522 1300px,#3E1D1F 1380px,#2C1B23 1440px,#1F2B31 1530px,#1F2E33 1920px)"></div>
<svg style="left:20px;top:1045px" width="21" height="21" viewBox="0 0 21 21"><path d="M0 3 L9 1.7 V10 H0 Z M10 1.5 L21 0 V10 H10 Z M0 11 H9 V19.3 L0 18 Z M10 11 H21 V21 L10 19.5 Z" fill="#fff"/></svg>
<svg style="left:80px;top:1045px" width="21" height="21" viewBox="0 0 21 21"><circle cx="13" cy="8" r="6.5" fill="none" stroke="#fff" stroke-width="1.5"/><path d="M8.5 12.5 L1 20" stroke="#fff" stroke-width="1.6"/></svg>
<svg style="left:139px;top:1045px" width="22" height="20" viewBox="0 0 22 20"><path d="M1 0 V19 M14 0 V19 M1 2 H14 M1 17 H14 M1 6 H14 V13 H1 Z M20 0 V19" stroke="#fff" stroke-width="1.4" fill="none"/><rect x="18.5" y="7" width="3" height="3" fill="#fff"/></svg>
<svg style="left:200px;top:1043px" width="29" height="24" viewBox="0 0 29 24"><path d="M0 2 Q0 0 2 0 H10 L12 2 H27 Q29 2 29 4 V20 Q29 22 27 22 H2 Q0 22 0 20 Z" fill="#F8CF5A"/><path d="M0 2 Q0 0 2 0 H10 L12 2 V4 H0 Z" fill="#E0A520"/><path d="M5 24 V12 H24 V24 H19.5 V16.5 H9.5 V24 Z" fill="#3A8EE6"/></svg>
<svg style="left:261px;top:1040px" width="30" height="30" viewBox="0 0 30 30"><path d="M9 8 Q9 2 15 2 Q21 2 21 8" stroke="#fff" stroke-width="2" fill="none"/><rect x="1" y="7" width="28" height="22" rx="1.5" fill="#fff"/><rect x="8.5" y="12" width="6" height="6" fill="#F25022"/><rect x="15.5" y="12" width="6" height="6" fill="#7FBA00"/><rect x="8.5" y="19" width="6" height="6" fill="#00A4EF"/><rect x="15.5" y="19" width="6" height="6" fill="#FFB900"/></svg>
<svg style="left:330px;top:1040px" width="17" height="31" viewBox="0 0 17 31"><path d="M14 0 L4 12 L11 16 L2 31 L15 18 L8 14 Z" fill="#3FA9F5"/><path d="M14 0 L4 12 L8 14 Z" fill="#5B6FE0"/></svg>
<svg style="left:386px;top:1041px" width="29" height="29" viewBox="0 0 29 29"><ellipse cx="13" cy="10" rx="12" ry="8" transform="rotate(-20 13 10)" fill="#fff" stroke="#D84040" stroke-width="1.6"/><ellipse cx="10" cy="15" rx="8" ry="4" fill="#AAA" opacity="0.8"/><path d="M12 3 L17 19 M16 3 L13 19" stroke="#777" stroke-width="1.2"/><circle cx="15" cy="23" r="3.5" fill="none" stroke="#1E90E0" stroke-width="2"/><circle cx="23" cy="21" r="3.5" fill="none" stroke="#1E90E0" stroke-width="2"/></svg>
<div class="a" style="left:432px;top:1030px;width:61px;height:47px;background:#6B4750"></div>
<div class="a" style="left:432px;top:1077px;width:61px;height:3px;background:#76B9ED"></div>
<svg style="left:447px;top:1040px" width="31" height="31" viewBox="0 0 31 31"><path d="M22 0 L31 4 V26 L22 30 L8 17 L3.5 21 L0 19 V10 L3.5 8 L8 12 Z M22 8.5 L14 14.5 L22 21.5 Z M3.5 12 V17.5 L6.5 14.5 Z" fill="#8A5CD6" fill-rule="evenodd"/><path d="M22 0 L31 4 V26 L22 30 Z" fill="#B48AF0"/></svg>
<svg style="left:509px;top:1040px" width="30" height="30" viewBox="0 0 30 30"><rect x="0.5" y="0.5" width="29" height="29" rx="2" fill="#1C4DB0" stroke="#0A1A40"/><rect x="2" y="2" width="26" height="13" fill="#E8EEF8" opacity="0.35"/><text x="15" y="12.5" font-size="10.5" font-weight="bold" text-anchor="middle" fill="#fff" font-family="Liberation Sans">DEV</text><text x="15" y="26" font-size="12" font-weight="bold" text-anchor="middle" fill="#0A2A70" font-family="Liberation Sans">C++</text></svg>
<svg style="left:570px;top:1040px" width="31" height="30" viewBox="0 0 31 30"><circle cx="15" cy="16" r="14" fill="#fff"/><circle cx="15" cy="16" r="12.5" fill="#4CAF50"/><circle cx="14" cy="16" r="5" fill="none" stroke="#fff" stroke-width="2.5"/><path d="M20 2 L30 2 L22 12 Z" fill="#fff"/><path d="M22 3 L20 9 M26 4 L22 10 M29 8 L23 12" stroke="#F07820" stroke-width="2"/></svg>
<div class="a" style="left:561px;top:1077px;width:51px;height:3px;background:#76B9ED"></div>
<svg style="left:635px;top:1044px" width="27" height="21" viewBox="0 0 27 21"><rect x="0.5" y="0.5" width="26" height="20" fill="#5A2D91" stroke="#B0A8C0"/><rect x="0.5" y="0.5" width="26" height="2" fill="#B0A8C0"/><text x="2" y="10" font-size="6.5" fill="#fff" font-family="Liberation Mono">C:\_</text></svg>
<div class="a" style="left:623px;top:1077px;width:51px;height:3px;background:#76B9ED"></div>
<svg style="left:1540px;top:1043px" width="29" height="28" viewBox="0 0 29 28"><circle cx="13" cy="13" r="12.5" fill="#fff"/><circle cx="13" cy="13" r="10.5" fill="#1E90E0"/><text x="13" y="19.5" font-size="17" font-weight="bold" text-anchor="middle" fill="#fff" font-family="Liberation Sans">?</text><circle cx="22" cy="21" r="6.5" fill="#1E90E0" stroke="#fff" stroke-width="1.2"/><text x="22" y="25" font-size="10" font-weight="bold" text-anchor="middle" fill="#fff" font-family="Liberation Sans">i</text></svg>
<svg style="left:1582px;top:1049px" width="17" height="10" viewBox="0 0 17 10"><path d="M1 9 L8.5 1.5 L16 9" stroke="#fff" stroke-width="1.5" fill="none"/></svg>
<svg style="left:1613px;top:1047px" width="17" height="17" viewBox="0 0 17 17"><path d="M1 16 Q1 1 16 1 M4 16 Q4 4 16 4 M7 16 Q7 7 16 7 M10 16 Q10 10 16 10" stroke="#E0E0E0" stroke-width="1.2" fill="none"/><circle cx="14" cy="14" r="2" fill="#fff"/></svg>
<svg style="left:1640px;top:1045px" width="21" height="20" viewBox="0 0 21 20"><rect x="0" y="0" width="21" height="20" fill="#F4D0D0"/><path d="M4 3 L10.5 17 L17 3" stroke="#D42020" stroke-width="3.2" fill="none"/></svg>
<svg style="left:1669px;top:1047px" width="22" height="15" viewBox="0 0 22 15"><rect x="5" y="2" width="15" height="11" fill="none" stroke="#fff" stroke-width="1.4"/><rect x="20" y="5" width="2" height="5" fill="#fff"/><rect x="7" y="4" width="11" height="7" fill="#fff"/><path d="M0 4 H5 M2 1 V4" stroke="#fff" stroke-width="1.3"/></svg>
<svg style="left:1700px;top:1047px" width="21" height="17" viewBox="0 0 21 17"><path d="M1 5.5 H4.5 L9 1.5 V15.5 L4.5 11.5 H1 Z" fill="none" stroke="#fff" stroke-width="1.3"/><path d="M12 6 Q13.5 8.5 12 11 M14.5 3.5 Q17.5 8.5 14.5 13.5 M17 1.5 Q21.5 8.5 17 15.5" stroke="#999" stroke-width="1.2" fill="none"/></svg>
<div class="t" style="left:1733px;top:1048px;color:#fff;font-size:15px">ENG</div>
<div class="t" style="left:1786px;top:1036px;color:#fff">8:31 PM</div>
<div class="t" style="left:1783px;top:1059px;color:#fff">1/2/2020</div>
<svg style="left:1869px;top:1045px" width="21" height="21" viewBox="0 0 21 21"><path d="M0.7 0.7 H20.3 V15.3 H13 L10.5 19 L8 15.3 H0.7 Z" fill="none" stroke="#fff" stroke-width="1.3"/></svg>
<div class="a" style="left:1914px;top:1030px;width:1px;height:50px;background:#55666B"></div>

</body></html>
